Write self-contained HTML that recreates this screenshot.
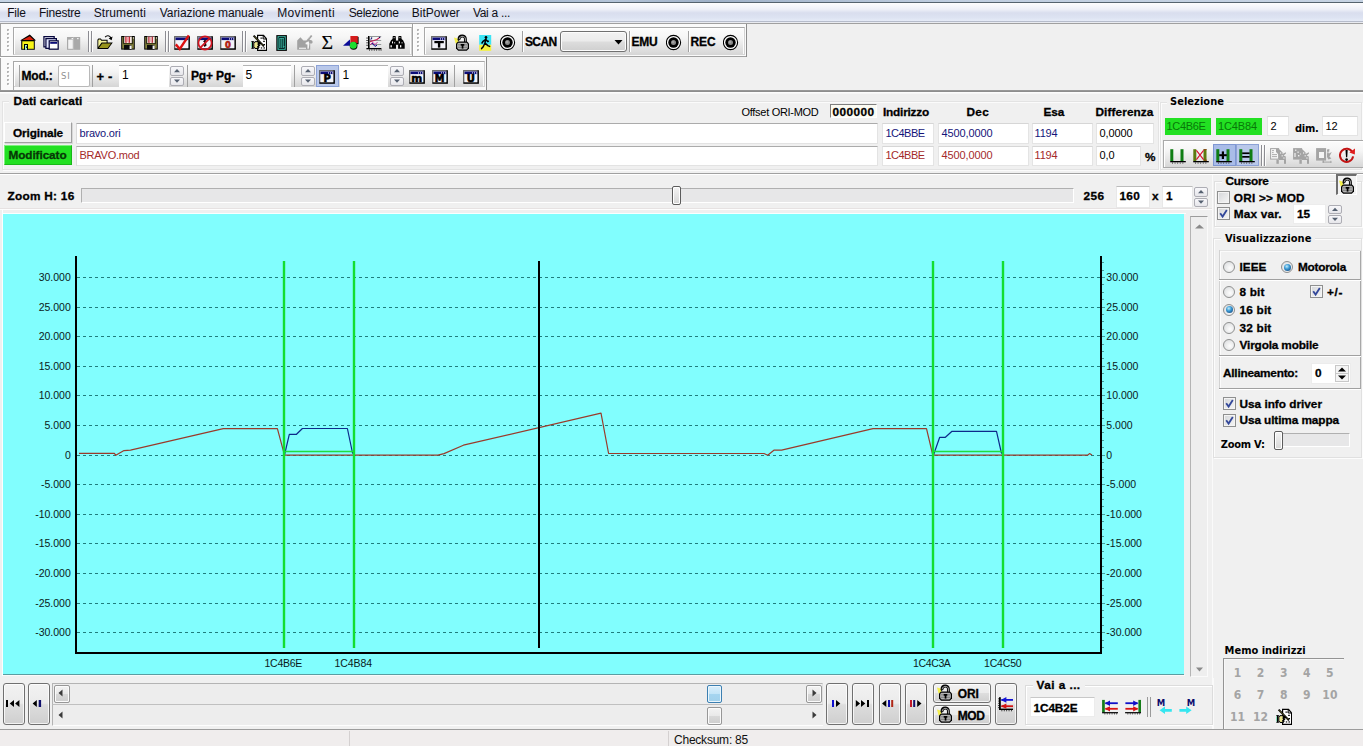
<!DOCTYPE html>
<html lang="it"><head><meta charset="utf-8"><title>Editor mappe</title>
<style>
html,body{margin:0;padding:0}
body{background:#f0f0f0;width:1363px;height:746px;overflow:hidden;font:11px "Liberation Sans",sans-serif}
#app{position:relative;width:1363px;height:746px;overflow:hidden;background:#f0f0f0}
#app div,#app span.t,#app svg{position:absolute;box-sizing:border-box}
span.t{white-space:nowrap;line-height:0;display:block;height:0}
.fld{background:#fff;border:1px solid #e3e3e3;border-top-color:#ababab;border-left-color:#dcdcdc}
.btn{border:1px solid #707070;border-radius:3px;background:linear-gradient(#f2f2f2 0,#ebebeb 48%,#dddddd 52%,#cfcfcf 100%);box-shadow:inset 0 0 0 1px rgba(255,255,255,.75)}
.tbg{background:linear-gradient(#fcfcfc 0,#f5f5f5 38%,#e5e5e5 72%,#d7d7d7 100%)}
.spin{border:1px solid #adadb4;background:linear-gradient(#f8f8fb,#e6e6ea)}

</style></head>
<body>
<div id="app">
<div style="left:0px;top:0px;width:1363px;height:2px;background:linear-gradient(90deg,#c6d4e4 0,#c2d0e2 20%,#8fa3bd 24%,#9fb2c9 32%,#b4c4d8 45%,#9fb1c8 52%,#c0cee0 70%,#c6d3e3 100%)"></div>
<div style="left:0px;top:2px;width:1363px;height:1px;background:#55636e"></div>
<div style="left:0px;top:3px;width:1363px;height:18px;background:linear-gradient(#fdfdfe 0,#eef0f8 35%,#d9deee 55%,#dde3f2 80%,#e6ebf7 100%)"></div>
<div style="left:0px;top:21px;width:1363px;height:1px;background:#b6bccb"></div>
<div style="left:0px;top:22px;width:1363px;height:1px;background:#e9ebf1"></div>
<div style="left:0px;top:23px;width:1363px;height:1px;background:#a0a0a0"></div>
<div style="left:0px;top:24px;width:747px;height:33px;background:#fafafa"></div>
<div style="left:0px;top:57px;width:487px;height:33px;background:#fafafa"></div>
<div style="left:0px;top:24px;width:1px;height:67px;background:#a0a0a0"></div>
<div style="left:0px;top:56px;width:747px;height:1px;background:#a0a0a0"></div>
<div style="left:0px;top:57px;width:487px;height:1px;background:#ffffff"></div>
<div style="left:412px;top:24px;width:1px;height:32px;background:#a0a0a0"></div>
<div style="left:413px;top:24px;width:1px;height:32px;background:#ffffff"></div>
<div style="left:746px;top:24px;width:1px;height:33px;background:#8c8c8c"></div>
<div style="left:486px;top:57px;width:1px;height:34px;background:#8c8c8c"></div>
<div style="left:0px;top:90px;width:1363px;height:1px;background:#989898"></div>
<div style="left:0px;top:91px;width:1363px;height:1px;background:#8e8e8e"></div>
<div style="left:0px;top:92px;width:1363px;height:1px;background:#fdfdfd"></div>
<div style="left:0px;top:93px;width:1363px;height:1px;background:#f7f7f7"></div>
<svg class="ic" style="left:7px;top:29px" width="3" height="26" shape-rendering="crispEdges"><rect x="0" y="0" width="2" height="2" fill="#b4b4b4"/><rect x="1" y="1" width="2" height="2" fill="#ffffff"/><rect x="1" y="1" width="1" height="1" fill="#d0d0d0"/><rect x="0" y="4" width="2" height="2" fill="#b4b4b4"/><rect x="1" y="5" width="2" height="2" fill="#ffffff"/><rect x="1" y="5" width="1" height="1" fill="#d0d0d0"/><rect x="0" y="8" width="2" height="2" fill="#b4b4b4"/><rect x="1" y="9" width="2" height="2" fill="#ffffff"/><rect x="1" y="9" width="1" height="1" fill="#d0d0d0"/><rect x="0" y="12" width="2" height="2" fill="#b4b4b4"/><rect x="1" y="13" width="2" height="2" fill="#ffffff"/><rect x="1" y="13" width="1" height="1" fill="#d0d0d0"/><rect x="0" y="16" width="2" height="2" fill="#b4b4b4"/><rect x="1" y="17" width="2" height="2" fill="#ffffff"/><rect x="1" y="17" width="1" height="1" fill="#d0d0d0"/><rect x="0" y="20" width="2" height="2" fill="#b4b4b4"/><rect x="1" y="21" width="2" height="2" fill="#ffffff"/><rect x="1" y="21" width="1" height="1" fill="#d0d0d0"/></svg>
<div class="tbg" style="left:13px;top:27px;width:399px;height:28px;border:1px solid;border-color:#a8a8a8 #d2d2d2 #d6d6d6 #a8a8a8;box-shadow:inset 1px 1px 0 #fff, inset -1px 0 0 #fbfbfb"></div>
<svg class="ic" style="left:417px;top:29px" width="3" height="26" shape-rendering="crispEdges"><rect x="0" y="0" width="2" height="2" fill="#b4b4b4"/><rect x="1" y="1" width="2" height="2" fill="#ffffff"/><rect x="1" y="1" width="1" height="1" fill="#d0d0d0"/><rect x="0" y="4" width="2" height="2" fill="#b4b4b4"/><rect x="1" y="5" width="2" height="2" fill="#ffffff"/><rect x="1" y="5" width="1" height="1" fill="#d0d0d0"/><rect x="0" y="8" width="2" height="2" fill="#b4b4b4"/><rect x="1" y="9" width="2" height="2" fill="#ffffff"/><rect x="1" y="9" width="1" height="1" fill="#d0d0d0"/><rect x="0" y="12" width="2" height="2" fill="#b4b4b4"/><rect x="1" y="13" width="2" height="2" fill="#ffffff"/><rect x="1" y="13" width="1" height="1" fill="#d0d0d0"/><rect x="0" y="16" width="2" height="2" fill="#b4b4b4"/><rect x="1" y="17" width="2" height="2" fill="#ffffff"/><rect x="1" y="17" width="1" height="1" fill="#d0d0d0"/><rect x="0" y="20" width="2" height="2" fill="#b4b4b4"/><rect x="1" y="21" width="2" height="2" fill="#ffffff"/><rect x="1" y="21" width="1" height="1" fill="#d0d0d0"/></svg>
<div class="tbg" style="left:424px;top:27px;width:321px;height:28px;border:1px solid;border-color:#a8a8a8 #d2d2d2 #d6d6d6 #a8a8a8;box-shadow:inset 1px 1px 0 #fff, inset -1px 0 0 #fbfbfb"></div>
<svg class="ic" style="left:7px;top:63px" width="3" height="24" shape-rendering="crispEdges"><rect x="0" y="0" width="2" height="2" fill="#b4b4b4"/><rect x="1" y="1" width="2" height="2" fill="#ffffff"/><rect x="1" y="1" width="1" height="1" fill="#d0d0d0"/><rect x="0" y="4" width="2" height="2" fill="#b4b4b4"/><rect x="1" y="5" width="2" height="2" fill="#ffffff"/><rect x="1" y="5" width="1" height="1" fill="#d0d0d0"/><rect x="0" y="8" width="2" height="2" fill="#b4b4b4"/><rect x="1" y="9" width="2" height="2" fill="#ffffff"/><rect x="1" y="9" width="1" height="1" fill="#d0d0d0"/><rect x="0" y="12" width="2" height="2" fill="#b4b4b4"/><rect x="1" y="13" width="2" height="2" fill="#ffffff"/><rect x="1" y="13" width="1" height="1" fill="#d0d0d0"/><rect x="0" y="16" width="2" height="2" fill="#b4b4b4"/><rect x="1" y="17" width="2" height="2" fill="#ffffff"/><rect x="1" y="17" width="1" height="1" fill="#d0d0d0"/><rect x="0" y="20" width="2" height="2" fill="#b4b4b4"/><rect x="1" y="21" width="2" height="2" fill="#ffffff"/><rect x="1" y="21" width="1" height="1" fill="#d0d0d0"/></svg>
<div class="tbg" style="left:13px;top:61px;width:472px;height:26px;border:1px solid;border-color:#a8a8a8 #d2d2d2 #d6d6d6 #a8a8a8;box-shadow:inset 1px 1px 0 #fff, inset -1px 0 0 #fbfbfb"></div>
<div style="left:13px;top:61px;width:1px;height:29px;background:#a8a8a8"></div>
<svg class="ic" style="left:20px;top:34px" width="16" height="17" viewBox="0 0 16 17" ><path d="M9.8 0.6 L16 6.6 L14.8 6.6 L14.8 15.8 L1.2 15.8 L1.2 6.6 L0 6.6 Z" fill="#000" shape-rendering="geometricPrecision"/><path d="M9.8 2.2 L13.8 6 L2.4 6 Z" fill="#d8200c" shape-rendering="geometricPrecision"/><rect x="2.3" y="7.3" width="11.5" height="7.5" fill="#f6f418" /><rect x="4" y="10" width="4" height="5.8" fill="#000" /><rect x="5" y="11" width="2" height="4.8" fill="#a6f0c8" /><rect x="6" y="12.4" width="1" height="1.6" fill="#103030" /></svg>
<svg class="ic" style="left:43px;top:34px" width="16" height="17" viewBox="0 0 16 17" ><rect x="0.3" y="2" width="11.5" height="11.5" fill="#06063c" /><rect x="1.55" y="3.25" width="9.0" height="9.0" fill="#f4f4ff" /><rect x="2.3" y="4" width="11.7" height="11" fill="#06063c" /><rect x="3.55" y="5.25" width="9.2" height="8.5" fill="#e4e8ff" /><rect x="5.6" y="6.2" width="10.2" height="9.6" fill="#06063c" /><rect x="6.85" y="7.45" width="7.699999999999999" height="7.1" fill="#fff" /><rect x="7.2" y="8" width="7" height="1.8" fill="#0c0c78" /></svg>
<svg class="ic" style="left:66px;top:34px" width="16" height="17" viewBox="0 0 16 17" ><rect x="1" y="3" width="13.2" height="12.8" fill="#a9a9a9" /><rect x="2.2" y="5.6" width="4.6" height="9.2" fill="#f3f3f3" /><rect x="5.6" y="4" width="1.3" height="1.2" fill="#fff" /><rect x="11.2" y="4" width="1.3" height="1.2" fill="#fff" /><rect x="7.2" y="3" width="0.9" height="12.8" fill="#bdbdbd" /></svg>
<div style="left:88px;top:31px;width:1px;height:21px;background:#8c8c92"></div>
<div style="left:91px;top:31px;width:1px;height:21px;background:#8c8c92"></div>
<div style="left:89px;top:31px;width:1px;height:21px;background:#fdfdfd"></div>
<div style="left:92px;top:31px;width:1px;height:21px;background:#fdfdfd"></div>
<svg class="ic" style="left:97px;top:34px" width="16" height="17" viewBox="0 0 16 17" ><path d="M0.4 5.8 L1.4 4.6 L3.8 4.6 L4.8 5.8 L10.6 5.8 L10.6 8.6 L15.8 8.6 L11 14.9 L0.4 14.9 Z" fill="#000" shape-rendering="geometricPrecision"/><path d="M1.3 6.4 L1.8 5.6 L3.4 5.6 L4.2 6.8 L9.6 6.8 L9.6 8.6 L4.6 8.6 L1.3 13 Z" fill="#f4f29a" shape-rendering="geometricPrecision"/><path d="M5.2 9.6 L14 9.6 L10.6 14 L1.9 14 Z" fill="#98941c" shape-rendering="geometricPrecision"/><path d="M8.2 3.2 C9.5 1.2 12.6 1 14 4.2" fill="none" stroke="#000" stroke-width="1.2" shape-rendering="geometricPrecision"/><path d="M15.6 2.4 L14.6 6.2 L11.6 4.4 Z" fill="#000" shape-rendering="geometricPrecision"/></svg>
<svg class="ic" style="left:120px;top:34px" width="16" height="17" viewBox="0 0 16 17" ><rect x="1.2" y="2" width="13.6" height="13.6" fill="#000" /><rect x="2.2" y="3" width="11.6" height="11.6" fill="#84823c" /><rect x="4" y="2.6" width="8" height="6.4" fill="#f6e6e0" /><rect x="5.3" y="2.6" width="1.3" height="6.2" fill="#c01828" /><rect x="8.6" y="2.6" width="1.3" height="6.2" fill="#c01828" /><rect x="6.6" y="3.2" width="2" height="4.6" fill="#f0a0a8" /><rect x="3.3" y="2.6" width="0.9" height="7.2" fill="#101008" /><rect x="11.8" y="2.6" width="0.9" height="7.2" fill="#101008" /><rect x="3.6" y="9.3" width="9" height="0.9" fill="#20200c" /><rect x="4" y="11" width="7.4" height="4.6" fill="#0a0a0a" /><rect x="9.6" y="11.6" width="2" height="3.4" fill="#f4f4f4" /><rect x="13" y="3.4" width="0.9" height="1.2" fill="#f0f0f0" /></svg>
<svg class="ic" style="left:143px;top:34px" width="16" height="17" viewBox="0 0 16 17" ><rect x="1.2" y="2" width="13.6" height="13.6" fill="#000" /><rect x="2.2" y="3" width="11.6" height="11.6" fill="#84823c" /><rect x="4" y="2.6" width="8" height="6.4" fill="#f6e6e0" /><rect x="5.3" y="2.6" width="1.3" height="6.2" fill="#b02030" /><rect x="8.6" y="2.6" width="1.3" height="6.2" fill="#b02030" /><rect x="6.6" y="3.2" width="2" height="4.6" fill="#e8b0b4" /><rect x="3.3" y="2.6" width="0.9" height="7.2" fill="#101008" /><rect x="11.8" y="2.6" width="0.9" height="7.2" fill="#101008" /><rect x="3.6" y="9.3" width="9" height="0.9" fill="#20200c" /><rect x="4" y="11" width="7.4" height="4.6" fill="#0a0a0a" /><rect x="9.6" y="11.6" width="2" height="3.4" fill="#f4f4f4" /><rect x="13" y="3.4" width="0.9" height="1.2" fill="#f0f0f0" /></svg>
<div style="left:165px;top:31px;width:1px;height:21px;background:#8c8c92"></div>
<div style="left:168px;top:31px;width:1px;height:21px;background:#8c8c92"></div>
<div style="left:166px;top:31px;width:1px;height:21px;background:#fdfdfd"></div>
<div style="left:169px;top:31px;width:1px;height:21px;background:#fdfdfd"></div>
<svg class="ic" style="left:174px;top:34px" width="16" height="17" viewBox="0 0 16 17" ><rect x="0.3" y="2.2" width="15.6" height="13.6" fill="#000" /><rect x="0.3" y="2.2" width="14.1" height="12.1" fill="#7a7a7a" /><rect x="1.4" y="3.3" width="12.9" height="10.9" fill="#f2f2f8" /><rect x="1.5" y="3.5" width="12.8" height="2.6" fill="#0c0c78" /><path d="M1.8 10.4 L5.8 15 L14.8 1.4" fill="none" stroke="#dc1010" stroke-width="2.4" shape-rendering="geometricPrecision" stroke-linejoin="miter"/></svg>
<svg class="ic" style="left:197px;top:34px" width="16" height="17" viewBox="0 0 16 17" ><rect x="0.3" y="2.2" width="15.6" height="13.6" fill="#000" /><rect x="0.3" y="2.2" width="14.1" height="12.1" fill="#7a7a7a" /><rect x="1.4" y="3.3" width="12.9" height="10.9" fill="#f2f2f8" /><rect x="1.5" y="3.5" width="12.8" height="2.6" fill="#0c0c78" /><path d="M8 5.2 L10 8 L8.8 8 L9.6 11.6 L7.6 13 L6.4 11.4 L7.6 10.4 L7 8 L6 8 Z" fill="#200808" shape-rendering="geometricPrecision"/><circle cx="8" cy="9" r="6.6" fill="none" stroke="#d01420" stroke-width="1.7" shape-rendering="geometricPrecision"/><path d="M3.4 13.6 L12.6 4.4" fill="none" stroke="#d01420" stroke-width="1.8" shape-rendering="geometricPrecision"/></svg>
<svg class="ic" style="left:220px;top:34px" width="16" height="17" viewBox="0 0 16 17" ><rect x="0.3" y="2.2" width="15.6" height="13.6" fill="#000" /><rect x="0.3" y="2.2" width="14.1" height="12.1" fill="#7a7a7a" /><rect x="1.4" y="3.3" width="12.9" height="10.9" fill="#f2f2f8" /><rect x="1.5" y="3.5" width="12.8" height="2.6" fill="#0c0c78" /><rect x="9" y="4.4" width="1" height="1.1" fill="#fff" /><rect x="11" y="4.4" width="1" height="1.1" fill="#fff" /><rect x="13" y="4.4" width="1" height="1.1" fill="#fff" /><text x="8" y="13.7" font-family="DejaVu Sans,sans-serif" font-weight="bold" font-size="8.4" text-anchor="middle" fill="#b01c0c" stroke="#b01c0c" stroke-width="0.6" >0</text></svg>
<div style="left:242px;top:31px;width:1px;height:21px;background:#8c8c92"></div>
<div style="left:245px;top:31px;width:1px;height:21px;background:#8c8c92"></div>
<div style="left:243px;top:31px;width:1px;height:21px;background:#fdfdfd"></div>
<div style="left:246px;top:31px;width:1px;height:21px;background:#fdfdfd"></div>
<svg class="ic" style="left:251px;top:34px" width="16" height="17" viewBox="0 0 16 17" ><path d="M6 0.8 L12.8 0.8 L16.2 4.6 L16.2 17 L6 17 Z" fill="#000" shape-rendering="geometricPrecision"/><path d="M7.2 2 L12.2 2 L15 5.2 L15 15.8 L7.2 15.8 Z" fill="#fff" shape-rendering="geometricPrecision"/><path d="M12.2 1.4 L12.2 5 L15.6 5" fill="none" stroke="#000" stroke-width="1" shape-rendering="geometricPrecision"/><rect x="9.4" y="3.6" width="2" height="1" fill="#000" /><rect x="12" y="6.8" width="2" height="1" fill="#000" /><rect x="12.4" y="10" width="1.6" height="1" fill="#000" /><rect x="9.8" y="13.4" width="1.4" height="1.1" fill="#000" /><rect x="12.4" y="13.4" width="1.6" height="1.1" fill="#000" /><path d="M2.6 1.6 L13 12.4" fill="none" stroke="#000" stroke-width="2.0" shape-rendering="geometricPrecision"/><path d="M3.2 2.4 L12 11.6" fill="none" stroke="#8c8a3c" stroke-width="0.7" shape-rendering="geometricPrecision"/><path d="M2.4 8.6 L4.6 7 L8.6 7.8 L11 10 L8.4 10.4 L9.6 11.6 L8 12.2 L9 13.2 L7.4 14 L8 15 L4.4 15 L2.4 13.6 Z" fill="#000" shape-rendering="geometricPrecision"/><path d="M3.3 9 L4.9 8 L7 8.6 L6.4 10.2 L7.2 11.4 L6 12.2 L6.6 13.4 L5.4 14 L4.6 14 L3.3 13 Z" fill="#ece68e" shape-rendering="geometricPrecision"/><rect x="0.9" y="7.4" width="1.5" height="7" fill="#000" /><rect x="0.3" y="7.2" width="2.6" height="0.9" fill="#000" /><rect x="0.3" y="13.8" width="2.6" height="0.9" fill="#000" /><rect x="0" y="8.4" width="0.9" height="5" fill="#7adcb4" /></svg>
<svg class="ic" style="left:274px;top:34px" width="16" height="17" viewBox="0 0 16 17" ><rect x="2.3" y="1.1" width="10.6" height="15.8" fill="#000" /><rect x="3.5" y="2.2" width="8.2" height="13.6" fill="#42c8b2" /><path d="M4.9 3.4 H10.4 V14.6 H4.9 Z" fill="none" stroke="#031c1c" stroke-width="1.0" /><rect x="6.4" y="4.6" width="1" height="9.4" fill="#031c1c" /><rect x="8.3" y="4.6" width="1" height="9.4" fill="#031c1c" /><rect x="9.4" y="12" width="1" height="1.2" fill="#42c8b2" /></svg>
<svg class="ic" style="left:297px;top:34px" width="16" height="17" viewBox="0 0 16 17" ><path d="M0.2 15.8 L0.2 6.6 L3.4 3.2 L6.4 6.4 L9.4 6.4 L14 1 L15.4 2 L12.4 5.8 L14.4 6.2 C15.8 6.6 16 8.6 15 9.6 L13.2 9.4 L13.2 15.8 Z" fill="#a2a2a2" shape-rendering="geometricPrecision"/><rect x="2" y="13.7" width="7" height="1.1" fill="#f4f4f4" /><path d="M8.6 8.8 L11.6 7.2 L12.4 9.4 L11.8 14.8 L10.4 14.8 L10.4 10.4 L8.6 10.2 Z" fill="#f6f6f6" shape-rendering="geometricPrecision"/><path d="M11 4.6 L12.6 2.6" fill="none" stroke="#e0e0e0" stroke-width=".8" shape-rendering="geometricPrecision"/></svg>
<svg class="ic" style="left:320px;top:34px" width="16" height="17" viewBox="0 0 16 17" ><text x="1.6" y="15.2" font-family="Liberation Serif,serif" font-size="18.5" textLength="11.6" lengthAdjust="spacingAndGlyphs" fill="#000" stroke="#000" stroke-width=".12">&#931;</text></svg>
<svg class="ic" style="left:343px;top:34px" width="16" height="17" viewBox="0 0 16 17" ><rect x="8.2" y="2.8" width="7.4" height="7.4" fill="#000" /><rect x="7.4" y="2" width="7.4" height="7.2" fill="#d41c1c" /><path d="M0 11.8 L6.8 5.6 L7.6 11.8 Z" fill="#0c0c98" shape-rendering="geometricPrecision"/><circle cx="10.6" cy="11.8" r="3.9" fill="#000" shape-rendering="geometricPrecision"/><circle cx="10.3" cy="11.3" r="3.5" fill="#1ce030" shape-rendering="geometricPrecision"/></svg>
<svg class="ic" style="left:366px;top:34px" width="16" height="17" viewBox="0 0 16 17" ><rect x="2" y="2" width="1.6" height="13" fill="#000" /><rect x="0.4" y="14" width="15" height="1.3" fill="#000" /><rect x="3.6" y="2.2" width="11.6" height="0.8" fill="#7c8484" /><rect x="3.6" y="6" width="11.6" height="0.8" fill="#7c8484" /><rect x="3.6" y="10" width="11.6" height="0.8" fill="#7c8484" /><rect x="0.2" y="3.6" width="1.8" height="0.9" fill="#404040" /><rect x="0.2" y="6" width="1.8" height="0.9" fill="#404040" /><rect x="0.2" y="8.4" width="1.8" height="0.9" fill="#404040" /><rect x="0.2" y="10.8" width="1.8" height="0.9" fill="#404040" /><rect x="3" y="15.3" width="0.9" height="1.4" fill="#303030" /><rect x="5.4" y="15.3" width="0.9" height="1.4" fill="#303030" /><rect x="7.8" y="15.3" width="0.9" height="1.4" fill="#303030" /><rect x="10.2" y="15.3" width="0.9" height="1.4" fill="#303030" /><rect x="12.6" y="15.3" width="0.9" height="1.4" fill="#303030" /><rect x="14.6" y="15.3" width="0.9" height="1.4" fill="#303030" /><path d="M4 7.6 L8 6.6 L11 5.4 L14 3.2" fill="none" stroke="#c01c50" stroke-width="1.1" shape-rendering="geometricPrecision"/><path d="M4 11 L6.6 8.4 L9 10.6 L11.4 8.2" fill="none" stroke="#c02890" stroke-width="1" shape-rendering="geometricPrecision"/><path d="M4.4 5.2 L6 4.6 M6 9 L9 12.4 L11 11.2" fill="none" stroke="#101090" stroke-width="1" shape-rendering="geometricPrecision"/><rect x="13" y="2.8" width="1.2" height="1.2" fill="#101060" /><rect x="5" y="3.4" width="1.2" height="1.2" fill="#101060" /></svg>
<svg class="ic" style="left:389px;top:34px" width="16" height="17" viewBox="0 0 16 17" ><path d="M3.8 2 L6.6 2 L6.9 5 L7 14.8 L0.3 14.8 L0.3 9.8 L2 6.2 L3.5 5 Z" fill="#000" shape-rendering="geometricPrecision"/><path d="M9.5 2 L12.3 2 L12.6 5 L14.1 6.2 L15.7 9.8 L15.7 14.8 L9.1 14.8 L9.2 5 Z" fill="#000" shape-rendering="geometricPrecision"/><rect x="6.8" y="6.6" width="2.6" height="4.2" fill="#000" /><rect x="4.6" y="3.2" width="1" height="1" fill="#fff" /><rect x="10.4" y="3.2" width="1" height="1" fill="#fff" /><rect x="3" y="7.4" width="1" height="2" fill="#fff" /><rect x="9.9" y="7.4" width="1" height="2" fill="#fff" /><rect x="1.5" y="11.2" width="1.3" height="2.2" fill="#fff" /><rect x="11" y="11.2" width="1.3" height="2.2" fill="#fff" /><rect x="5.2" y="8.2" width="0.9" height="1.2" fill="#e8e8e8" /><rect x="12.6" y="8.2" width="0.9" height="1.2" fill="#e8e8e8" /></svg>
<svg class="ic" style="left:431px;top:34px" width="16" height="17" viewBox="0 0 16 17" ><rect x="0.3" y="2.2" width="15.6" height="13.6" fill="#000" /><rect x="0.3" y="2.2" width="14.1" height="12.1" fill="#7a7a7a" /><rect x="1.4" y="3.3" width="12.9" height="10.9" fill="#f2f2f8" /><rect x="1.5" y="3.5" width="12.8" height="2.6" fill="#0c0c78" /><rect x="9" y="4.4" width="1" height="1.1" fill="#fff" /><rect x="11" y="4.4" width="1" height="1.1" fill="#fff" /><rect x="13" y="4.4" width="1" height="1.1" fill="#fff" /><rect x="3.4" y="7" width="9.4" height="2.2" fill="#000" /><rect x="6.9" y="7" width="2.4" height="6.6" fill="#000" /></svg>
<svg class="ic" style="left:454px;top:34px" width="16" height="17" viewBox="0 0 16 17" ><path d="M0 3.6 L3.6 4.4 L4.6 8.8 L1.6 9.6 Z" fill="#f4f03c" shape-rendering="geometricPrecision" opacity=".9"/><path d="M11.4 8.6 L11.4 5 C11.4 0.9 5 0.9 5 5.4 L5.6 6.2" fill="none" stroke="#000" stroke-width="2.9" shape-rendering="geometricPrecision" stroke-linecap="butt"/><path d="M11.4 8.6 L11.4 5 C11.4 1.4 5.2 1.4 5.2 5.3" fill="none" stroke="#cfcfcf" stroke-width="0.8" shape-rendering="geometricPrecision"/><path d="M4 7.6 L13 7.6 L15 9.6 L15 14.4 L12.8 16.7 L4.2 16.7 L2 14.4 L2 9.6 Z" fill="#000" shape-rendering="geometricPrecision"/><path d="M4.4 8.7 L12.6 8.7 L13.9 10 L13.9 14 L12.4 15.6 L4.6 15.6 L3.1 14 L3.1 10 Z" fill="#b4b4b4" shape-rendering="geometricPrecision"/><rect x="3.1" y="10.4" width="10.8" height="0.9" fill="#767676" /><rect x="3.1" y="12.8" width="10.8" height="0.9" fill="#767676" /><rect x="6.7" y="10" width="3.6" height="1.7" fill="#000" /><rect x="7.7" y="11" width="1.7" height="3.6" fill="#000" /></svg>
<svg class="ic" style="left:477px;top:34px" width="16" height="17" viewBox="0 0 16 17" ><rect x="2.2" y="1" width="12" height="9.8" fill="#3ce4f4" /><rect x="2.2" y="10.8" width="12" height="6" fill="#f4f23c" /><circle cx="9" cy="3.2" r="1.3" fill="#000" shape-rendering="geometricPrecision"/><path d="M9 4.4 L8 9 L10.8 11.6 L12.6 12.4 M8 9 L6.2 12.8 L4.6 14.6 M8.8 5.4 L6 7.4 L5 9 M8.8 5.4 L10.8 7.6 L11.4 7.2" fill="none" stroke="#000" stroke-width="1.5" shape-rendering="geometricPrecision" stroke-linejoin="round" stroke-linecap="round"/></svg>
<svg class="ic" style="left:500px;top:34px" width="16" height="17" viewBox="0 0 16 17" ><circle cx="7.5" cy="8.5" r="7.1" fill="#fdfdfd" stroke="#000" stroke-width="1.1" shape-rendering="geometricPrecision"/><circle cx="7.5" cy="8.5" r="5.2" fill="#000" shape-rendering="geometricPrecision"/><circle cx="7.5" cy="8.5" r="2.5" fill="#8a8a8a" shape-rendering="geometricPrecision"/><circle cx="7" cy="8" r="1.2" fill="#a4a4a4" shape-rendering="geometricPrecision"/></svg>
<div style="left:522px;top:31px;width:1px;height:21px;background:#a0a0a0"></div>
<div style="left:523px;top:31px;width:1px;height:21px;background:#ffffff"></div>
<div style="left:560px;top:31px;width:67px;height:21px;border:1px solid #707070;border-radius:3px;background:linear-gradient(#f2f2f2 0,#ebebeb 48%,#dddddd 52%,#cfcfcf 100%);box-shadow:inset 0 0 0 1px #fcfcfc"></div>
<svg class="ic" style="left:614px;top:40px" width="9" height="5"><path d="M0.5 0 L8.5 0 L4.5 4.5 Z" fill="#000"/></svg>
<div style="left:629px;top:31px;width:1px;height:21px;background:#a0a0a0"></div>
<div style="left:630px;top:31px;width:1px;height:21px;background:#ffffff"></div>
<svg class="ic" style="left:666px;top:34px" width="16" height="17" viewBox="0 0 16 17" ><circle cx="7.5" cy="8.5" r="7.1" fill="#fdfdfd" stroke="#000" stroke-width="1.1" shape-rendering="geometricPrecision"/><circle cx="7.5" cy="8.5" r="5.2" fill="#000" shape-rendering="geometricPrecision"/><circle cx="7.5" cy="8.5" r="2.5" fill="#8a8a8a" shape-rendering="geometricPrecision"/><circle cx="7" cy="8" r="1.2" fill="#a4a4a4" shape-rendering="geometricPrecision"/></svg>
<div style="left:688px;top:31px;width:1px;height:21px;background:#a0a0a0"></div>
<div style="left:689px;top:31px;width:1px;height:21px;background:#ffffff"></div>
<svg class="ic" style="left:723px;top:34px" width="16" height="17" viewBox="0 0 16 17" ><circle cx="7.5" cy="8.5" r="7.1" fill="#fdfdfd" stroke="#000" stroke-width="1.1" shape-rendering="geometricPrecision"/><circle cx="7.5" cy="8.5" r="5.2" fill="#000" shape-rendering="geometricPrecision"/><circle cx="7.5" cy="8.5" r="2.5" fill="#8a8a8a" shape-rendering="geometricPrecision"/><circle cx="7" cy="8" r="1.2" fill="#a4a4a4" shape-rendering="geometricPrecision"/></svg>
<div style="left:19px;top:65px;width:1px;height:22px;background:#a0a0a0"></div>
<div class="fld" style="left:58px;top:65px;width:32px;height:22px;border:1px solid #b8b8b8;border-radius:2px"></div>
<div style="left:92px;top:65px;width:1px;height:22px;background:#a0a0a0"></div>
<div style="left:119px;top:65px;width:50px;height:22px;background:#fff;border-top:1px solid #b4b4b4"></div>
<div class="spin" style="left:170px;top:66px;width:14px;height:9.5px;border-radius:2px"></div>
<div class="spin" style="left:170px;top:76.5px;width:14px;height:9.5px;border-radius:2px"></div>
<svg class="ic" style="left:170px;top:66px" width="14" height="20"><path d="M4.0 6.35 L7.0 2.95 L10.0 6.35 Z" fill="#556070"/><path d="M4.0 13.45 L7.0 16.85 L10.0 13.45 Z" fill="#556070"/></svg>
<div style="left:187px;top:65px;width:1px;height:22px;background:#a0a0a0"></div>
<div style="left:243px;top:65px;width:48px;height:22px;background:#fff;border-top:1px solid #b4b4b4"></div>
<div style="left:294px;top:65px;width:1px;height:22px;background:#a0a0a0"></div>
<div class="spin" style="left:301px;top:66px;width:14px;height:9.5px;border-radius:2px"></div>
<div class="spin" style="left:301px;top:76.5px;width:14px;height:9.5px;border-radius:2px"></div>
<svg class="ic" style="left:301px;top:66px" width="14" height="20"><path d="M4.0 6.35 L7.0 2.95 L10.0 6.35 Z" fill="#556070"/><path d="M4.0 13.45 L7.0 16.85 L10.0 13.45 Z" fill="#556070"/></svg>
<div style="left:316px;top:65px;width:23px;height:22px;background:#b9c8ea;border:1px solid #8da2d6"></div>
<svg class="ic" style="left:319px;top:68px" width="16" height="17" viewBox="0 0 16 17" ><rect x="0.3" y="2.2" width="15.6" height="13.6" fill="#000" /><rect x="0.3" y="2.2" width="14.1" height="12.1" fill="#7a7a7a" /><rect x="1.4" y="3.3" width="12.9" height="10.9" fill="#f2f2f8" /><rect x="1.5" y="3.5" width="12.8" height="2.6" fill="#0c0c78" /><rect x="9" y="4.4" width="1" height="1.1" fill="#fff" /><rect x="11" y="4.4" width="1" height="1.1" fill="#fff" /><rect x="13" y="4.4" width="1" height="1.1" fill="#fff" /><text x="8.2" y="13.8" font-family="DejaVu Sans,sans-serif" font-weight="bold" font-size="10" text-anchor="middle" fill="#000" stroke="#000" stroke-width="0.6" >P</text></svg>
<div style="left:340px;top:65px;width:48px;height:22px;background:#fff;border-top:1px solid #b4b4b4"></div>
<div class="spin" style="left:390px;top:66px;width:14px;height:9.5px;border-radius:2px"></div>
<div class="spin" style="left:390px;top:76.5px;width:14px;height:9.5px;border-radius:2px"></div>
<svg class="ic" style="left:390px;top:66px" width="14" height="20"><path d="M4.0 6.35 L7.0 2.95 L10.0 6.35 Z" fill="#556070"/><path d="M4.0 13.45 L7.0 16.85 L10.0 13.45 Z" fill="#556070"/></svg>
<svg class="ic" style="left:409px;top:68px" width="16" height="17" viewBox="0 0 16 17" ><rect x="0.3" y="2.2" width="15.6" height="13.6" fill="#000" /><rect x="0.3" y="2.2" width="14.1" height="12.1" fill="#7a7a7a" /><rect x="1.4" y="3.3" width="12.9" height="10.9" fill="#f2f2f8" /><rect x="1.5" y="3.5" width="12.8" height="2.6" fill="#0c0c78" /><rect x="9" y="4.4" width="1" height="1.1" fill="#fff" /><rect x="11" y="4.4" width="1" height="1.1" fill="#fff" /><rect x="13" y="4.4" width="1" height="1.1" fill="#fff" /><text x="7.7" y="13.6" font-family="DejaVu Sans,sans-serif" font-weight="bold" font-size="10.5" text-anchor="middle" fill="#000" stroke="#000" stroke-width="0.6" >m</text></svg>
<svg class="ic" style="left:432px;top:68px" width="16" height="17" viewBox="0 0 16 17" ><rect x="0.3" y="2.2" width="15.6" height="13.6" fill="#000" /><rect x="0.3" y="2.2" width="14.1" height="12.1" fill="#7a7a7a" /><rect x="1.4" y="3.3" width="12.9" height="10.9" fill="#f2f2f8" /><rect x="1.5" y="3.5" width="12.8" height="2.6" fill="#0c0c78" /><rect x="9" y="4.4" width="1" height="1.1" fill="#fff" /><rect x="11" y="4.4" width="1" height="1.1" fill="#fff" /><rect x="13" y="4.4" width="1" height="1.1" fill="#fff" /><text x="7.7" y="13.8" font-family="DejaVu Sans,sans-serif" font-weight="bold" font-size="9.8" text-anchor="middle" fill="#000" stroke="#000" stroke-width="0.6" >M</text></svg>
<div style="left:454px;top:65px;width:1px;height:22px;background:#a0a0a0"></div>
<svg class="ic" style="left:463px;top:68px" width="16" height="17" viewBox="0 0 16 17" ><rect x="0.3" y="2.2" width="15.6" height="13.6" fill="#000" /><rect x="0.3" y="2.2" width="14.1" height="12.1" fill="#7a7a7a" /><rect x="1.4" y="3.3" width="12.9" height="10.9" fill="#f2f2f8" /><rect x="1.5" y="3.5" width="12.8" height="2.6" fill="#0c0c78" /><rect x="9" y="4.4" width="1" height="1.1" fill="#fff" /><rect x="11" y="4.4" width="1" height="1.1" fill="#fff" /><rect x="13" y="4.4" width="1" height="1.1" fill="#fff" /><text x="7.7" y="13.8" font-family="DejaVu Sans,sans-serif" font-weight="bold" font-size="10" text-anchor="middle" fill="#000" stroke="#000" stroke-width="0.6" >U</text></svg>
<div style="left:2px;top:101px;width:1157px;height:69px;border:1px solid #e3e3e3;box-shadow:inset 1px 1px 0 #fbfbfb, 1px 1px 0 #fbfbfb"></div>
<div style="left:9px;top:95px;width:78px;height:12px;background:#f0f0f0"></div>
<div style="left:1160px;top:102px;width:202px;height:68px;border:1px solid #e3e3e3;box-shadow:inset 1px 1px 0 #fbfbfb, 1px 1px 0 #fbfbfb"></div>
<div style="left:1167px;top:96px;width:60px;height:12px;background:#f0f0f0"></div>
<div style="left:0px;top:173px;width:1363px;height:1px;background:#a0a0a0"></div>
<div style="left:0px;top:174px;width:1363px;height:1px;background:#ffffff"></div>
<div style="left:4px;top:122px;width:68px;height:21px;background:#f0f0f0;border:1px solid;border-color:#ffffff #a0a0a0 #a0a0a0 #ffffff;box-shadow:1px 1px 0 #d8d8d8"></div>
<div style="left:4px;top:145px;width:68px;height:20px;background:#22e022;border:1px solid;border-color:#7df07d #18b818 #18b818 #7df07d"></div>
<div class="fld" style="left:76px;top:123px;width:802px;height:21px;"></div>
<div class="fld" style="left:76px;top:146px;width:802px;height:20px;"></div>
<div style="left:830px;top:104px;width:47px;height:14px;background:#fbfbf3;border:1px solid;border-color:#808080 #fff #fff #808080"></div>
<div style="left:882px;top:123px;width:52px;height:21px;background:#fff;border:1px solid #e4e4e4;border-top-color:#d6d6d6"></div>
<div style="left:882px;top:146px;width:52px;height:20px;background:#fff;border:1px solid #e4e4e4;border-top-color:#d6d6d6"></div>
<div style="left:938px;top:123px;width:91px;height:21px;background:#fff;border:1px solid #e4e4e4;border-top-color:#d6d6d6"></div>
<div style="left:938px;top:146px;width:91px;height:20px;background:#fff;border:1px solid #e4e4e4;border-top-color:#d6d6d6"></div>
<div style="left:1032px;top:123px;width:61px;height:21px;background:#fff;border:1px solid #e4e4e4;border-top-color:#d6d6d6"></div>
<div style="left:1032px;top:146px;width:61px;height:20px;background:#fff;border:1px solid #e4e4e4;border-top-color:#d6d6d6"></div>
<div style="left:1096px;top:123px;width:58px;height:21px;background:#fff;border:1px solid #e4e4e4;border-top-color:#d6d6d6"></div>
<div style="left:1096px;top:146px;width:45px;height:20px;background:#fff;border:1px solid #e4e4e4;border-top-color:#d6d6d6"></div>
<div style="left:1165px;top:118px;width:46px;height:17px;background:#22e022"></div>
<div style="left:1216px;top:118px;width:46px;height:17px;background:#22e022"></div>
<div style="left:1267px;top:116px;width:22px;height:20px;background:#fff;border:1px solid #e4e4e4;border-top-color:#d6d6d6"></div>
<div style="left:1322px;top:116px;width:36px;height:20px;background:#fff;border:1px solid #e4e4e4;border-top-color:#d6d6d6"></div>
<div class="tbg" style="left:1163px;top:140px;width:200px;height:28px;border:1px solid #a9a9a9;border-right:0;box-shadow:inset 1px 1px 0 #fff"></div>
<div style="left:1213px;top:144px;width:23px;height:22px;background:#a9bce8;border:1px solid #7f97d3"></div>
<div style="left:1236px;top:144px;width:23px;height:22px;background:#b9c8ea;border:1px solid #8da2d6"></div>
<svg class="ic" style="left:1170px;top:147px" width="16" height="17" viewBox="0 0 16 17" ><rect x="0.3" y="2.2" width="3" height="11.8" fill="#0f7d14" /><rect x="10.5" y="2.2" width="3" height="11.8" fill="#0f7d14" /><rect x="0.2" y="14" width="15.6" height="1.3" fill="#000" /><rect x="2" y="15.4" width="0.9" height="1.3" fill="#444" /><rect x="4.6" y="15.4" width="0.9" height="1.3" fill="#444" /><rect x="7.2" y="15.4" width="0.9" height="1.3" fill="#444" /><rect x="9.8" y="15.4" width="0.9" height="1.3" fill="#444" /><rect x="12.4" y="15.4" width="0.9" height="1.3" fill="#444" /></svg>
<svg class="ic" style="left:1193px;top:147px" width="16" height="17" viewBox="0 0 16 17" ><rect x="0.3" y="2.2" width="3" height="11.8" fill="#5e7a10" /><rect x="10.5" y="2.2" width="3" height="11.8" fill="#5e7a10" /><rect x="0.2" y="14" width="15.6" height="1.3" fill="#000" /><rect x="2" y="15.4" width="0.9" height="1.3" fill="#444" /><rect x="4.6" y="15.4" width="0.9" height="1.3" fill="#444" /><rect x="7.2" y="15.4" width="0.9" height="1.3" fill="#444" /><rect x="9.8" y="15.4" width="0.9" height="1.3" fill="#444" /><rect x="12.4" y="15.4" width="0.9" height="1.3" fill="#444" /><path d="M3.4 3.4 L10.6 12.6 M10.6 3.4 L3.4 12.6" fill="none" stroke="#d81030" stroke-width="1.1" shape-rendering="geometricPrecision"/><path d="M10.6 2.6 L13.6 2.6 M10.6 13.2 L14 13.2" fill="none" stroke="#8a3a10" stroke-width="0.9" shape-rendering="geometricPrecision"/></svg>
<svg class="ic" style="left:1216px;top:147px" width="16" height="17" viewBox="0 0 16 17" ><rect x="0.3" y="2.2" width="3" height="11.8" fill="#0f7d14" /><rect x="10.5" y="2.2" width="3" height="11.8" fill="#0f7d14" /><rect x="0.2" y="14" width="15.6" height="1.3" fill="#000" /><rect x="2" y="15.4" width="0.9" height="1.3" fill="#444" /><rect x="4.6" y="15.4" width="0.9" height="1.3" fill="#444" /><rect x="7.2" y="15.4" width="0.9" height="1.3" fill="#444" /><rect x="9.8" y="15.4" width="0.9" height="1.3" fill="#444" /><rect x="12.4" y="15.4" width="0.9" height="1.3" fill="#444" /><rect x="3.2" y="7.2" width="7.6" height="2" fill="#000" /><rect x="5.8" y="4.4" width="2.2" height="7.6" fill="#000" /></svg>
<svg class="ic" style="left:1239px;top:147px" width="16" height="17" viewBox="0 0 16 17" ><rect x="0.3" y="2.2" width="3" height="11.8" fill="#0f7d14" /><rect x="10.5" y="2.2" width="3" height="11.8" fill="#0f7d14" /><rect x="0.2" y="14" width="15.6" height="1.3" fill="#000" /><rect x="2" y="15.4" width="0.9" height="1.3" fill="#444" /><rect x="4.6" y="15.4" width="0.9" height="1.3" fill="#444" /><rect x="7.2" y="15.4" width="0.9" height="1.3" fill="#444" /><rect x="9.8" y="15.4" width="0.9" height="1.3" fill="#444" /><rect x="12.4" y="15.4" width="0.9" height="1.3" fill="#444" /><rect x="3.2" y="5.4" width="7.4" height="1.7" fill="#000" /><rect x="3.2" y="9" width="7.4" height="1.7" fill="#000" /></svg>
<div style="left:1261px;top:145px;width:1px;height:21px;background:#8c8c92"></div>
<div style="left:1264px;top:145px;width:1px;height:21px;background:#8c8c92"></div>
<div style="left:1262px;top:145px;width:1px;height:21px;background:#fdfdfd"></div>
<div style="left:1265px;top:145px;width:1px;height:21px;background:#fdfdfd"></div>
<svg class="ic" style="left:1270px;top:147px" width="16" height="17" viewBox="0 0 16 17" ><rect x="0.1" y="1.1" width="9" height="11.5" fill="#a4a4a4" /><rect x="1.1" y="2.1" width="7" height="9.5" fill="#f6f6f6" /><rect x="2" y="3.2" width="2" height="0.9" fill="#a4a4a4" /><rect x="2" y="5.2" width="1.6" height="0.9" fill="#a4a4a4" /><rect x="2" y="7.2" width="5" height="0.9" fill="#a4a4a4" /><rect x="2" y="9.2" width="5" height="0.9" fill="#a4a4a4" /><path d="M6 2 L9 2 L12.6 5.6 L12.6 7 L15.8 5.2 L16 6.4 L13.6 8.4 L15.8 9.6 L15.8 13 L9 13 L9 8 L6 5 Z" fill="#a4a4a4" shape-rendering="geometricPrecision"/><rect x="10" y="5.4" width="1.2" height="1.2" fill="#f0f0f0" /><rect x="11.6" y="8.2" width="1.2" height="1.2" fill="#f0f0f0" /><rect x="13.4" y="10.4" width="1.1" height="1.3" fill="#f0f0f0" /><rect x="6.4" y="12.6" width="2.4" height="4.2" fill="#a4a4a4" /><rect x="14" y="12.6" width="2" height="4.2" fill="#a4a4a4" /></svg>
<svg class="ic" style="left:1293px;top:147px" width="16" height="17" viewBox="0 0 16 17" ><rect x="0.1" y="1.1" width="9" height="11.5" fill="#a4a4a4" /><rect x="2" y="2.6" width="1.4" height="1.2" fill="#f0f0f0" /><rect x="1.4" y="6" width="1.2" height="4" fill="#f0f0f0" /><rect x="4.4" y="4.6" width="1.4" height="1.2" fill="#f0f0f0" /><rect x="5" y="8" width="1.4" height="1.4" fill="#f0f0f0" /><rect x="7" y="6.2" width="1.2" height="1.2" fill="#f0f0f0" /><path d="M6 2 L9 2 L12.6 5.6 L12.6 7 L15.8 5.2 L16 6.4 L13.6 8.4 L15.8 9.6 L15.8 13 L9 13 L9 8 L6 5 Z" fill="#a4a4a4" shape-rendering="geometricPrecision"/><rect x="10" y="5.4" width="1.2" height="1.2" fill="#f0f0f0" /><rect x="11.6" y="8.2" width="1.2" height="1.2" fill="#f0f0f0" /><rect x="13.4" y="10.4" width="1.1" height="1.3" fill="#f0f0f0" /><rect x="6.4" y="12.6" width="2.4" height="4.2" fill="#a4a4a4" /><rect x="14" y="12.6" width="2" height="4.2" fill="#a4a4a4" /></svg>
<svg class="ic" style="left:1316px;top:147px" width="16" height="17" viewBox="0 0 16 17" ><rect x="0.1" y="1.1" width="10" height="12.5" fill="#a4a4a4" /><rect x="3" y="5" width="5" height="6" fill="#f4f4f4" /><path d="M11 2.4 L13.4 2 L13 6.4 L15.8 5 L13.4 9.4 L15.4 11.4 L12.4 12.6 L11 10 Z" fill="#a4a4a4" shape-rendering="geometricPrecision"/><rect x="6.6" y="14.6" width="8.6" height="1" fill="#a4a4a4" /><rect x="6.6" y="13.4" width="1.4" height="2.4" fill="#a4a4a4" /><rect x="14.4" y="13.8" width="1" height="2.2" fill="#a4a4a4" /><rect x="11.6" y="4.6" width="1" height="1.6" fill="#f2f2f2" /></svg>
<svg class="ic" style="left:1339px;top:147px" width="16" height="17" viewBox="0 0 16 17" ><path d="M13.4 5.2 A6.6 6.6 0 1 0 14.1 9.4" fill="none" stroke="#c21414" stroke-width="2" shape-rendering="geometricPrecision"/><path d="M16 1.6 L15.8 7.6 L10.4 5.4 Z" fill="#e01c1c" shape-rendering="geometricPrecision"/><path d="M6.5 3 L8.7 3 L8.2 10.2 L7 10.2 Z" fill="#000" shape-rendering="geometricPrecision"/><circle cx="7.6" cy="12.6" r="1.3" fill="#000" shape-rendering="geometricPrecision"/></svg>
<div style="left:81px;top:188px;width:993px;height:15px;background:#e7e7e8;border-top:1px solid #b0b0b0;border-left:1px solid #b0b0b0;border-bottom:1px solid #fff;border-right:1px solid #fff"></div>
<div style="left:672px;top:186px;width:9px;height:19px;border:1px solid #5c5c5c;border-radius:2px;background:linear-gradient(#f4f4f4,#d6d6d6);box-shadow:inset 0 0 0 1px #fff"></div>
<div style="left:1116px;top:186px;width:34px;height:22px;background:#fff;border:1px solid #e8e8e8;border-top-color:#bcbcbc"></div>
<div style="left:1162px;top:186px;width:31px;height:22px;background:#fff;border:1px solid #e8e8e8;border-top-color:#bcbcbc"></div>
<div class="spin" style="left:1194px;top:187px;width:14px;height:9.5px;border-radius:2px"></div>
<div class="spin" style="left:1194px;top:197.5px;width:14px;height:9.5px;border-radius:2px"></div>
<svg class="ic" style="left:1194px;top:187px" width="14" height="20"><path d="M4.0 6.35 L7.0 2.95 L10.0 6.35 Z" fill="#556070"/><path d="M4.0 13.45 L7.0 16.85 L10.0 13.45 Z" fill="#556070"/></svg>
<div style="left:3px;top:675px;width:1182px;height:1px;background:#fafafa"></div>
<div style="left:0px;top:208px;width:1212px;height:1px;background:#e6e2e2"></div>
<div style="left:0px;top:209px;width:1212px;height:1px;background:#fdfdfd"></div>
<div style="left:2px;top:213px;width:1184px;height:1px;background:#fbffff"></div>
<div style="left:2px;top:209px;width:1px;height:467px;background:#fbffff"></div>
<svg class="ic" style="left:3px;top:214px" width="1181" height="461" viewBox="0 0 1181 461"><rect x="0" y="0" width="1181" height="461" fill="#81fefe"/><rect x="0" y="460" width="1181" height="1" fill="#5a9ea2"/><path d="M74 418.5 H1098 M74 389.5 H1098 M74 359.5 H1098 M74 329.5 H1098 M74 300.5 H1098 M74 270.5 H1098 M74 241.5 H1098 M74 211.5 H1098 M74 181.5 H1098 M74 152.5 H1098 M74 122.5 H1098 M74 93.5 H1098 M74 63.5 H1098" stroke="#1f7d7d" stroke-width="1" stroke-dasharray="3 3" fill="none" shape-rendering="crispEdges"/><path d="M1099 433.5 h2 M1099 426.5 h2 M1099 418.5 h3 M1099 411.5 h2 M1099 403.5 h2 M1099 396.5 h2 M1099 389.5 h3 M1099 381.5 h2 M1099 374.5 h2 M1099 366.5 h2 M1099 359.5 h3 M1099 352.5 h2 M1099 344.5 h2 M1099 337.5 h2 M1099 329.5 h3 M1099 322.5 h2 M1099 315.5 h2 M1099 307.5 h2 M1099 300.5 h3 M1099 292.5 h2 M1099 285.5 h2 M1099 278.5 h2 M1099 270.5 h3 M1099 263.5 h2 M1099 255.5 h2 M1099 248.5 h2 M1099 241.5 h3 M1099 233.5 h2 M1099 226.5 h2 M1099 218.5 h2 M1099 211.5 h3 M1099 204.5 h2 M1099 196.5 h2 M1099 189.5 h2 M1099 181.5 h3 M1099 174.5 h2 M1099 167.5 h2 M1099 159.5 h2 M1099 152.5 h3 M1099 144.5 h2 M1099 137.5 h2 M1099 130.5 h2 M1099 122.5 h3 M1099 115.5 h2 M1099 107.5 h2 M1099 100.5 h2 M1099 93.5 h3 M1099 85.5 h2 M1099 78.5 h2 M1099 70.5 h2 M1099 63.5 h3 M1099 56.5 h2 M1099 48.5 h2" stroke="#1a4a4a" stroke-width="1" fill="none" shape-rendering="crispEdges" opacity=".55"/><path d="M281.5 241.0 L286.3 220.3 L293.5 220.3 L299.4 214.5 L344.4 214.5 L349.4 238.5 L351.5 241.0" stroke="#0d2a8a" stroke-width="1.2" fill="none" stroke-linejoin="round"/><path d="M930.5 241.0 L936.7 223.3 L942.4 223.3 L949.0 217.3 L993.5 217.3 L998.3 238.5 L1000.5 241.0" stroke="#0d2a8a" stroke-width="1.2" fill="none" stroke-linejoin="round"/><path d="M282 237.5 H351 M931 237.5 H1000" stroke="#20dc40" stroke-width="1.4" fill="none"/><path d="M76.0 239.4 L111.4 239.4 L112.8 241.3 L121.0 236.6 L127.5 236.2 L220.3 214.6 L274.4 214.6 L281.5 241.2 L435.0 241.2 L441.0 239.6 L460.4 231.2 L598.0 199.2 L605.6 239.5 L761.0 239.5 L764.7 241.2 L770.9 236.2 L778.6 236.2 L870.0 214.6 L923.5 214.6 L929.8 241.2 L1084.5 241.2 L1086.5 239.6 L1089.0 241.0" stroke="#9a3a2a" stroke-width="1.2" fill="none" stroke-linejoin="round"/><rect x="279.8" y="47" width="2.4" height="387" fill="#12de30"/><rect x="349.8" y="47" width="2.4" height="387" fill="#12de30"/><rect x="928.8" y="47" width="2.4" height="387" fill="#12de30"/><rect x="998.8" y="47" width="2.4" height="387" fill="#12de30"/><rect x="535" y="47" width="2" height="387" fill="#000"/><rect x="72" y="42" width="2" height="398" fill="#000"/><rect x="1097" y="42" width="2" height="398" fill="#000"/><rect x="72" y="438" width="1027" height="2" fill="#000"/></svg>
<div style="left:1190px;top:216px;width:18px;height:461px;background:#eeeeee;border-left:1px solid #b4b4b4;border-top:1px solid #9c9c9c;border-right:1px solid #fafafa;border-bottom:1px solid #fafafa"></div>
<svg class="ic" style="left:1190px;top:214px" width="18" height="463"><path d="M5 14.5 L9.5 10.5 L14 14.5 Z" fill="#8a8a8a"/><path d="M6 453.5 L13 453.5 L9.5 457.5 Z" fill="#8a8a8a"/></svg>
<div style="left:1212px;top:175px;width:1px;height:555px;background:#fafafa"></div>
<div style="left:1214px;top:181px;width:148px;height:46px;border:1px solid #e0e0e0;box-shadow:inset 1px 1px 0 #fcfcfc, 1px 1px 0 #fcfcfc"></div>
<div style="left:1222px;top:175px;width:50px;height:12px;background:#f0f0f0"></div>
<div style="left:1336px;top:174px;width:21px;height:21px;background:#f2f2f2;border:1px solid #fff;border-top:2px solid #6e6e6e;border-left:2px solid #6e6e6e"></div>
<svg class="ic" style="left:1338.6px;top:176.5px" width="16" height="17" viewBox="0 0 16 17" ><path d="M0 3.6 L3.6 4.4 L4.6 8.8 L1.6 9.6 Z" fill="#f4f03c" shape-rendering="geometricPrecision" opacity=".9"/><path d="M11.4 8.6 L11.4 5 C11.4 0.9 5 0.9 5 5.4 L5.6 6.2" fill="none" stroke="#000" stroke-width="2.9" shape-rendering="geometricPrecision" stroke-linecap="butt"/><path d="M11.4 8.6 L11.4 5 C11.4 1.4 5.2 1.4 5.2 5.3" fill="none" stroke="#cfcfcf" stroke-width="0.8" shape-rendering="geometricPrecision"/><path d="M4 7.6 L13 7.6 L15 9.6 L15 14.4 L12.8 16.7 L4.2 16.7 L2 14.4 L2 9.6 Z" fill="#000" shape-rendering="geometricPrecision"/><path d="M4.4 8.7 L12.6 8.7 L13.9 10 L13.9 14 L12.4 15.6 L4.6 15.6 L3.1 14 L3.1 10 Z" fill="#b4b4b4" shape-rendering="geometricPrecision"/><rect x="3.1" y="10.4" width="10.8" height="0.9" fill="#767676" /><rect x="3.1" y="12.8" width="10.8" height="0.9" fill="#767676" /><rect x="6.7" y="10" width="3.6" height="1.7" fill="#000" /><rect x="7.7" y="11" width="1.7" height="3.6" fill="#000" /></svg>
<div style="left:1217px;top:191px;width:13px;height:13px;border:1px solid #8e8f8f;background:linear-gradient(135deg,#d4d6d9,#f6f6f6);box-shadow:inset 0 0 0 1px #f4f4f4"></div>
<div style="left:1217px;top:207px;width:13px;height:13px;border:1px solid #8e8f8f;background:linear-gradient(135deg,#d4d6d9,#f6f6f6);box-shadow:inset 0 0 0 1px #f4f4f4"></div>
<svg class="ic" style="left:1217px;top:207px" width="13" height="13"><path d="M3.2 6.2 L5.6 9.6 L9.8 3" stroke="#33489a" stroke-width="1.8" fill="none"/></svg>
<div style="left:1293px;top:204px;width:33px;height:20px;background:#fff;border:1px solid #ececec"></div>
<div class="spin" style="left:1328px;top:205px;width:14px;height:9.0px;border-radius:2px"></div>
<div class="spin" style="left:1328px;top:215.0px;width:14px;height:9.0px;border-radius:2px"></div>
<svg class="ic" style="left:1328px;top:205px" width="14" height="19"><path d="M4.0 6.1 L7.0 2.7 L10.0 6.1 Z" fill="#556070"/><path d="M4.0 12.7 L7.0 16.1 L10.0 12.7 Z" fill="#556070"/></svg>
<div style="left:1213px;top:238px;width:149px;height:220px;border:1px solid #e0e0e0;box-shadow:inset 1px 1px 0 #fcfcfc, 1px 1px 0 #fcfcfc"></div>
<div style="left:1221px;top:232px;width:94px;height:12px;background:#f0f0f0"></div>
<div style="left:1219px;top:250px;width:142px;height:1px;background:#e2e2e2"></div>
<div style="left:1220px;top:251px;width:140px;height:1px;background:#fbfbfb"></div>
<div style="left:1219px;top:250px;width:1px;height:140px;background:#d2d2d2"></div>
<div style="left:1220px;top:251px;width:1px;height:138px;background:#fbfbfb"></div>
<div style="left:1360px;top:251px;width:1px;height:139px;background:#a8a8a8"></div>
<div style="left:1219px;top:279px;width:142px;height:1px;background:#a0a0a0"></div>
<div style="left:1219px;top:280px;width:142px;height:1px;background:#fff"></div>
<div style="left:1219px;top:355px;width:142px;height:1px;background:#a0a0a0"></div>
<div style="left:1219px;top:356px;width:142px;height:1px;background:#fff"></div>
<div style="left:1219px;top:388px;width:142px;height:1px;background:#a0a0a0"></div>
<div style="left:1219px;top:389px;width:142px;height:1px;background:#fff"></div>
<div style="left:1223px;top:261px;width:12px;height:12px;border:1px solid #8e8f8f;border-radius:6px;background:radial-gradient(circle at 60% 60%,#fdfdfd,#d6d8da)"></div>
<div style="left:1281px;top:261px;width:12px;height:12px;border:1px solid #8e8f8f;border-radius:6px;background:radial-gradient(circle at 60% 60%,#fdfdfd,#d6d8da)"></div>
<div style="left:1283.5px;top:263.5px;width:7px;height:7px;border-radius:4px;background:radial-gradient(circle at 40% 35%,#c4ecf9 0,#3b9bd6 40%,#123f74 92%)"></div>
<div style="left:1223px;top:285.5px;width:12px;height:12px;border:1px solid #8e8f8f;border-radius:6px;background:radial-gradient(circle at 60% 60%,#fdfdfd,#d6d8da)"></div>
<div style="left:1310px;top:285px;width:13px;height:13px;border:1px solid #8e8f8f;background:linear-gradient(135deg,#d4d6d9,#f6f6f6);box-shadow:inset 0 0 0 1px #f4f4f4"></div>
<svg class="ic" style="left:1310px;top:285px" width="13" height="13"><path d="M3.2 6.2 L5.6 9.6 L9.8 3" stroke="#33489a" stroke-width="1.8" fill="none"/></svg>
<div style="left:1223px;top:303.5px;width:12px;height:12px;border:1px solid #8e8f8f;border-radius:6px;background:radial-gradient(circle at 60% 60%,#fdfdfd,#d6d8da)"></div>
<div style="left:1225.5px;top:306.0px;width:7px;height:7px;border-radius:4px;background:radial-gradient(circle at 40% 35%,#c4ecf9 0,#3b9bd6 40%,#123f74 92%)"></div>
<div style="left:1223px;top:321.5px;width:12px;height:12px;border:1px solid #8e8f8f;border-radius:6px;background:radial-gradient(circle at 60% 60%,#fdfdfd,#d6d8da)"></div>
<div style="left:1223px;top:338.5px;width:12px;height:12px;border:1px solid #8e8f8f;border-radius:6px;background:radial-gradient(circle at 60% 60%,#fdfdfd,#d6d8da)"></div>
<div style="left:1311px;top:363px;width:40px;height:21px;background:#fff;border:1px solid #ececec"></div>
<div style="left:1335px;top:365px;width:14px;height:17px;background:#f4f4f4;border:1px solid #c8c8c8"></div>
<svg class="ic" style="left:1335px;top:365px" width="14" height="17"><path d="M3 6.5 L7 2.5 L11 6.5 Z M3 10.5 L11 10.5 L7 14.5 Z" fill="#000"/><path d="M1 8.5 H13" stroke="#c8c8c8"/></svg>
<div style="left:1223px;top:397px;width:13px;height:13px;border:1px solid #8e8f8f;background:linear-gradient(135deg,#d4d6d9,#f6f6f6);box-shadow:inset 0 0 0 1px #f4f4f4"></div>
<svg class="ic" style="left:1223px;top:397px" width="13" height="13"><path d="M3.2 6.2 L5.6 9.6 L9.8 3" stroke="#33489a" stroke-width="1.8" fill="none"/></svg>
<div style="left:1223px;top:413.5px;width:13px;height:13px;border:1px solid #8e8f8f;background:linear-gradient(135deg,#d4d6d9,#f6f6f6);box-shadow:inset 0 0 0 1px #f4f4f4"></div>
<svg class="ic" style="left:1223px;top:413.5px" width="13" height="13"><path d="M3.2 6.2 L5.6 9.6 L9.8 3" stroke="#33489a" stroke-width="1.8" fill="none"/></svg>
<div style="left:1277px;top:433px;width:73px;height:14px;background:#e7e7e8;border:1px solid;border-color:#b0b0b0 #fff #fff #b0b0b0"></div>
<div style="left:1274px;top:431px;width:9px;height:19px;border:1px solid #5c5c5c;border-radius:2px;background:linear-gradient(#f4f4f4,#d6d6d6);box-shadow:inset 0 0 0 1px #fff"></div>
<div style="left:1223px;top:658px;width:121px;height:1px;background:#949494"></div>
<div style="left:1223px;top:658px;width:1px;height:71px;background:#949494"></div>
<div style="left:1224px;top:659px;width:119px;height:1px;background:#f8f8f8"></div>
<div style="left:1224px;top:659px;width:1px;height:70px;background:#f8f8f8"></div>
<svg class="ic" style="left:1275.6px;top:708px" width="16" height="17" viewBox="0 0 16 17" ><path d="M6 0.8 L12.8 0.8 L16.2 4.6 L16.2 17 L6 17 Z" fill="#000" shape-rendering="geometricPrecision"/><path d="M7.2 2 L12.2 2 L15 5.2 L15 15.8 L7.2 15.8 Z" fill="#fff" shape-rendering="geometricPrecision"/><path d="M12.2 1.4 L12.2 5 L15.6 5" fill="none" stroke="#000" stroke-width="1" shape-rendering="geometricPrecision"/><rect x="9.4" y="3.6" width="2" height="1" fill="#000" /><rect x="12" y="6.8" width="2" height="1" fill="#000" /><rect x="12.4" y="10" width="1.6" height="1" fill="#000" /><rect x="9.8" y="13.4" width="1.4" height="1.1" fill="#000" /><rect x="12.4" y="13.4" width="1.6" height="1.1" fill="#000" /><path d="M2.6 1.6 L13 12.4" fill="none" stroke="#000" stroke-width="2.0" shape-rendering="geometricPrecision"/><path d="M3.2 2.4 L12 11.6" fill="none" stroke="#8c8a3c" stroke-width="0.7" shape-rendering="geometricPrecision"/><path d="M2.4 8.6 L4.6 7 L8.6 7.8 L11 10 L8.4 10.4 L9.6 11.6 L8 12.2 L9 13.2 L7.4 14 L8 15 L4.4 15 L2.4 13.6 Z" fill="#000" shape-rendering="geometricPrecision"/><path d="M3.3 9 L4.9 8 L7 8.6 L6.4 10.2 L7.2 11.4 L6 12.2 L6.6 13.4 L5.4 14 L4.6 14 L3.3 13 Z" fill="#ece68e" shape-rendering="geometricPrecision"/><rect x="0.9" y="7.4" width="1.5" height="7" fill="#000" /><rect x="0.3" y="7.2" width="2.6" height="0.9" fill="#000" /><rect x="0.3" y="13.8" width="2.6" height="0.9" fill="#000" /><rect x="0" y="8.4" width="0.9" height="5" fill="#7adcb4" /></svg>
<div class="btn" style="left:3px;top:683px;width:22px;height:42px;"></div>
<div class="btn" style="left:28px;top:683px;width:22px;height:42px;"></div>
<div style="left:52px;top:683px;width:771px;height:22px;background:#ededed;border:1px solid #b4b4b4;border-right-color:#e0e0e0;border-bottom-color:#c0c0c0"></div>
<div style="left:52px;top:705px;width:771px;height:21px;background:#ededed;border-left:1px solid #b4b4b4;border-bottom:1px solid #fdfdfd"></div>
<div style="left:54px;top:685px;width:16px;height:18px;border:1px solid #979797;border-radius:2px;background:linear-gradient(#f3f3f3 0,#e9e9e9 48%,#d9d9d9 52%,#cdcdcd 100%);box-shadow:inset 0 0 0 1px #fbfbfb"></div>
<div style="left:806px;top:685px;width:16px;height:18px;border:1px solid #979797;border-radius:2px;background:linear-gradient(#f3f3f3 0,#e9e9e9 48%,#d9d9d9 52%,#cdcdcd 100%);box-shadow:inset 0 0 0 1px #fbfbfb"></div>
<div style="left:707px;top:685px;width:15px;height:18px;border:1px solid #3c7fb1;border-radius:2px;background:linear-gradient(#d9eefb 0,#c3e5f8 48%,#a5d5f0 52%,#a0d0ec 100%);box-shadow:inset 0 0 0 1px #eaf6fd"></div>
<div style="left:707px;top:707px;width:15px;height:18px;border:1px solid #979797;border-radius:2px;background:linear-gradient(#f3f3f3 0,#e9e9e9 48%,#d9d9d9 52%,#cdcdcd 100%);box-shadow:inset 0 0 0 1px #fbfbfb"></div>
<svg class="ic" style="left:52px;top:683px" width="771" height="43"><g fill="#3a3a3a"><path d="M10.5 6.5 L10.5 13.5 L6.5 10 Z"/><path d="M10.5 28.5 L10.5 35.5 L6.5 32 Z"/><path d="M760.5 6.5 L760.5 13.5 L764.5 10 Z"/><path d="M760.5 28.5 L760.5 35.5 L764.5 32 Z"/></g></svg>
<div class="btn" style="left:826px;top:683px;width:22px;height:42px;"></div>
<div class="btn" style="left:852px;top:683px;width:22px;height:42px;"></div>
<div class="btn" style="left:879px;top:683px;width:22px;height:42px;"></div>
<div class="btn" style="left:905px;top:683px;width:22px;height:42px;"></div>
<div class="btn" style="left:933px;top:683px;width:58px;height:20px;"></div>
<div class="btn" style="left:933px;top:705px;width:58px;height:20px;"></div>
<svg class="ic" style="left:937px;top:684px" width="16" height="17" viewBox="0 0 16 17" ><path d="M0 3.6 L3.6 4.4 L4.6 8.8 L1.6 9.6 Z" fill="#f4f03c" shape-rendering="geometricPrecision" opacity=".9"/><path d="M11.4 8.6 L11.4 5 C11.4 0.9 5 0.9 5 5.4 L5.6 6.2" fill="none" stroke="#000" stroke-width="2.9" shape-rendering="geometricPrecision" stroke-linecap="butt"/><path d="M11.4 8.6 L11.4 5 C11.4 1.4 5.2 1.4 5.2 5.3" fill="none" stroke="#cfcfcf" stroke-width="0.8" shape-rendering="geometricPrecision"/><path d="M4 7.6 L13 7.6 L15 9.6 L15 14.4 L12.8 16.7 L4.2 16.7 L2 14.4 L2 9.6 Z" fill="#000" shape-rendering="geometricPrecision"/><path d="M4.4 8.7 L12.6 8.7 L13.9 10 L13.9 14 L12.4 15.6 L4.6 15.6 L3.1 14 L3.1 10 Z" fill="#b4b4b4" shape-rendering="geometricPrecision"/><rect x="3.1" y="10.4" width="10.8" height="0.9" fill="#767676" /><rect x="3.1" y="12.8" width="10.8" height="0.9" fill="#767676" /><rect x="6.7" y="10" width="3.6" height="1.7" fill="#000" /><rect x="7.7" y="11" width="1.7" height="3.6" fill="#000" /></svg>
<svg class="ic" style="left:937px;top:706px" width="16" height="17" viewBox="0 0 16 17" ><path d="M0 3.6 L3.6 4.4 L4.6 8.8 L1.6 9.6 Z" fill="#f4f03c" shape-rendering="geometricPrecision" opacity=".9"/><path d="M11.4 8.6 L11.4 5 C11.4 0.9 5 0.9 5 5.4 L5.6 6.2" fill="none" stroke="#000" stroke-width="2.9" shape-rendering="geometricPrecision" stroke-linecap="butt"/><path d="M11.4 8.6 L11.4 5 C11.4 1.4 5.2 1.4 5.2 5.3" fill="none" stroke="#cfcfcf" stroke-width="0.8" shape-rendering="geometricPrecision"/><path d="M4 7.6 L13 7.6 L15 9.6 L15 14.4 L12.8 16.7 L4.2 16.7 L2 14.4 L2 9.6 Z" fill="#000" shape-rendering="geometricPrecision"/><path d="M4.4 8.7 L12.6 8.7 L13.9 10 L13.9 14 L12.4 15.6 L4.6 15.6 L3.1 14 L3.1 10 Z" fill="#b4b4b4" shape-rendering="geometricPrecision"/><rect x="3.1" y="10.4" width="10.8" height="0.9" fill="#767676" /><rect x="3.1" y="12.8" width="10.8" height="0.9" fill="#767676" /><rect x="6.7" y="10" width="3.6" height="1.7" fill="#000" /><rect x="7.7" y="11" width="1.7" height="3.6" fill="#000" /></svg>
<div class="btn" style="left:995px;top:683px;width:22px;height:42px;"></div>
<svg class="ic" style="left:998px;top:696px" width="16" height="16" viewBox="0 0 16 16" ><rect x="1" y="1.2" width="1.8" height="12.6" fill="#000" /><rect x="1" y="12.6" width="14" height="1.4" fill="#000" /><rect x="0" y="2.4" width="1" height="0.9" fill="#333" /><rect x="0" y="4.6" width="1" height="0.9" fill="#333" /><rect x="0" y="6.8" width="1" height="0.9" fill="#333" /><rect x="0" y="9" width="1" height="0.9" fill="#333" /><rect x="0" y="11.2" width="1" height="0.9" fill="#333" /><rect x="3.4" y="14" width="0.9" height="1.3" fill="#333" /><rect x="5.8" y="14" width="0.9" height="1.3" fill="#333" /><rect x="8.2" y="14" width="0.9" height="1.3" fill="#333" /><rect x="10.6" y="14" width="0.9" height="1.3" fill="#333" /><rect x="13" y="14" width="0.9" height="1.3" fill="#333" /><rect x="3.4" y="3.0" width="11.6" height="1.8" fill="#1414d4" /><path d="M2.8 3.9 L8.4 1.0 L8.4 6.8 Z" fill="#1414d4" shape-rendering="geometricPrecision"/><rect x="3.4" y="9.299999999999999" width="11.6" height="1.8" fill="#d41414" /><path d="M2.8 10.2 L8.4 7.6 L8.4 12.799999999999999 Z" fill="#d41414" shape-rendering="geometricPrecision"/></svg>
<svg class="ic" style="left:0px;top:682px" width="930" height="42"><g fill="#000"><rect x="6" y="18" width="2" height="7"/><path d="M14 18 v7 l-4.3 -3.5 Z M19.4 18 v7 l-4.3 -3.5 Z"/><path d="M36.8 18 v7 l-4.2 -3.5 Z"/><path d="M836 18 v7 l4.3 -3.5 Z"/><path d="M855.8 18 v7 l4.3 -3.5 Z M861 18 v7 l4.3 -3.5 Z"/><rect x="867" y="18" width="2" height="7"/><path d="M886.3 18 v7 l-4.3 -3.5 Z"/><path d="M917.2 18 v7 l4.3 -3.5 Z"/></g><rect x="38.7" y="18" width="2.4" height="7" fill="#10106c"/><rect x="832" y="18" width="2" height="7" fill="#1010d0"/><rect x="888" y="18" width="2" height="7" fill="#1010b0"/><rect x="891.2" y="18" width="2" height="7" fill="#b02818"/><rect x="910" y="18" width="2" height="7" fill="#c01828"/><rect x="913.2" y="18" width="2" height="7" fill="#10106c"/></svg>
<div style="left:1025px;top:685px;width:188px;height:40px;border:1px solid #dcdcdc;box-shadow:inset 1px 1px 0 #fff, 1px 1px 0 #fff"></div>
<div style="left:1033px;top:679px;width:52px;height:12px;background:#f0f0f0"></div>
<div style="left:1030px;top:697px;width:65px;height:20px;background:#fff;border:1px solid #ececec;border-top-color:#c8c8c8"></div>
<svg class="ic" style="left:1102px;top:699px" width="16" height="16" viewBox="0 0 16 16" ><rect x="0.1" y="0.9" width="2.7" height="12.4" fill="#157d19" /><rect x="0.1" y="13.1" width="16" height="1.2" fill="#000" /><rect x="2.4" y="14.2" width="0.9" height="1.2" fill="#333" /><rect x="4.8" y="14.2" width="0.9" height="1.2" fill="#333" /><rect x="7.2" y="14.2" width="0.9" height="1.2" fill="#333" /><rect x="9.6" y="14.2" width="0.9" height="1.2" fill="#333" /><rect x="12" y="14.2" width="0.9" height="1.2" fill="#333" /><rect x="14.2" y="14.2" width="0.9" height="1.2" fill="#333" /><rect x="3.4" y="3.3000000000000003" width="12.4" height="1.8" fill="#1010c8" /><path d="M2.8 4.2 L8 1.4000000000000004 L8 7.0 Z" fill="#1010c8" shape-rendering="geometricPrecision"/><rect x="3.4" y="8.9" width="12.4" height="1.8" fill="#d81414" /><path d="M2.8 9.8 L8 7.200000000000001 L8 12.4 Z" fill="#d81414" shape-rendering="geometricPrecision"/></svg>
<svg class="ic" style="left:1125px;top:699px" width="16" height="16" viewBox="0 0 16 16" ><rect x="13.4" y="0.9" width="2.7" height="12.4" fill="#157d19" /><rect x="0.1" y="13.1" width="16" height="1.2" fill="#000" /><rect x="2.4" y="14.2" width="0.9" height="1.2" fill="#333" /><rect x="4.8" y="14.2" width="0.9" height="1.2" fill="#333" /><rect x="7.2" y="14.2" width="0.9" height="1.2" fill="#333" /><rect x="9.6" y="14.2" width="0.9" height="1.2" fill="#333" /><rect x="12" y="14.2" width="0.9" height="1.2" fill="#333" /><rect x="14.2" y="14.2" width="0.9" height="1.2" fill="#333" /><rect x="0.4" y="3.3000000000000003" width="12.2" height="1.8" fill="#1010c8" /><path d="M13.2 4.2 L8.2 1.4000000000000004 L8.2 7.0 Z" fill="#1010c8" shape-rendering="geometricPrecision"/><rect x="0.4" y="8.9" width="12.2" height="1.8" fill="#d81414" /><path d="M13.2 9.8 L8.2 7.200000000000001 L8.2 12.4 Z" fill="#d81414" shape-rendering="geometricPrecision"/></svg>
<div style="left:1147px;top:697px;width:1px;height:20px;background:#9a9a9a"></div>
<div style="left:1150px;top:697px;width:1px;height:20px;background:#9a9a9a"></div>
<svg class="ic" style="left:1157px;top:696px" width="16" height="20" viewBox="0 0 16 20" ><path d="M2.6 14.3 L8 10.6 L8 12.9 L14.8 12.9 L14.8 15.7 L8 15.7 L8 18 Z" fill="#34e6f0" shape-rendering="geometricPrecision"/></svg>
<svg class="ic" style="left:1179px;top:696px" width="16" height="20" viewBox="0 0 16 20" ><path d="M12.6 14.3 L7.2 10.6 L7.2 12.9 L0.4 12.9 L0.4 15.7 L7.2 15.7 L7.2 18 Z" fill="#34e6f0" shape-rendering="geometricPrecision"/></svg>
<div style="left:1213px;top:678px;width:1px;height:51px;background:#fafafa"></div>
<div style="left:0px;top:729px;width:1363px;height:1px;background:#9c9c9c"></div>
<div style="left:0px;top:730px;width:1363px;height:16px;background:#f0eded"></div>
<div style="left:349px;top:731px;width:1px;height:15px;background:#d4d0d0"></div>
<div style="left:668px;top:731px;width:1px;height:15px;background:#d4d0d0"></div>
<span class="t" style='left:7.2px;top:6.00px;font:12px "Liberation Sans",sans-serif;color:#101018;letter-spacing:-0.236px;'>File</span>
<span class="t" style='left:39.0px;top:6.00px;font:12px "Liberation Sans",sans-serif;color:#101018;letter-spacing:-0.232px;'>Finestre</span>
<span class="t" style='left:93.7px;top:6.00px;font:12px "Liberation Sans",sans-serif;color:#101018;letter-spacing:0.105px;'>Strumenti</span>
<span class="t" style='left:159.8px;top:6.00px;font:12px "Liberation Sans",sans-serif;color:#101018;letter-spacing:-0.083px;'>Variazione manuale</span>
<span class="t" style='left:277.2px;top:6.00px;font:12px "Liberation Sans",sans-serif;color:#101018;letter-spacing:0.357px;'>Movimenti</span>
<span class="t" style='left:348.7px;top:6.00px;font:12px "Liberation Sans",sans-serif;color:#101018;letter-spacing:-0.324px;'>Selezione</span>
<span class="t" style='left:411.8px;top:6.00px;font:12px "Liberation Sans",sans-serif;color:#101018;'>BitPower</span>
<span class="t" style='left:472.9px;top:6.00px;font:12px "Liberation Sans",sans-serif;color:#101018;letter-spacing:-0.289px;'>Vai a ...</span>
<span class="t" style='left:525px;top:35.00px;font:bold 12px "Liberation Sans",sans-serif;color:#000;letter-spacing:-0.629px;-webkit-text-stroke:.3px;'>SCAN</span>
<span class="t" style='left:631.5px;top:35.00px;font:bold 12px "Liberation Sans",sans-serif;color:#000;letter-spacing:-0.224px;-webkit-text-stroke:.3px;'>EMU</span>
<span class="t" style='left:690.5px;top:35.00px;font:bold 12px "Liberation Sans",sans-serif;color:#000;letter-spacing:-0.115px;-webkit-text-stroke:.3px;'>REC</span>
<span class="t" style='left:21.5px;top:69.00px;font:bold 12px "Liberation Sans",sans-serif;color:#000;letter-spacing:-0.200px;-webkit-text-stroke:.3px;'>Mod.:</span>
<span class="t" style='left:61px;top:70.50px;font:8.5px "DejaVu Sans","Liberation Sans",sans-serif;color:#909090;letter-spacing:0.797px;'>SI</span>
<span class="t" style='left:96.5px;top:69.00px;font:bold 13px "Liberation Sans",sans-serif;color:#000;letter-spacing:0.151px;-webkit-text-stroke:.3px;'>+ -</span>
<span class="t" style='left:122px;top:68.00px;font:12px "Liberation Sans",sans-serif;color:#000;'>1</span>
<span class="t" style='left:191px;top:69.00px;font:bold 12px "Liberation Sans",sans-serif;color:#000;letter-spacing:-0.145px;-webkit-text-stroke:.3px;'>Pg+ Pg-</span>
<span class="t" style='left:245.5px;top:68.00px;font:12px "Liberation Sans",sans-serif;color:#000;'>5</span>
<span class="t" style='left:342.5px;top:68.00px;font:12px "Liberation Sans",sans-serif;color:#000;'>1</span>
<span class="t" style='left:13.5px;top:94.00px;font:bold 11.8px "Liberation Sans",sans-serif;color:#000;letter-spacing:0.162px;-webkit-text-stroke:.3px;'>Dati caricati</span>
<span class="t" style='left:1170px;top:95.00px;font:bold 11px "DejaVu Sans Condensed","DejaVu Sans",sans-serif;color:#000;letter-spacing:0.038px;'>Selezione</span>
<span class="t" style='left:13px;top:126.00px;font:bold 11.8px "Liberation Sans",sans-serif;color:#000;letter-spacing:-0.127px;-webkit-text-stroke:.3px;'>Originale</span>
<span class="t" style='left:8.5px;top:148.00px;font:bold 11.8px "Liberation Sans",sans-serif;color:#063806;letter-spacing:-0.098px;-webkit-text-stroke:.3px;'>Modificato</span>
<span class="t" style='left:79.5px;top:127.00px;font:11px "Liberation Sans",sans-serif;color:#15157a;letter-spacing:-0.200px;'>bravo.ori</span>
<span class="t" style='left:79.5px;top:149.20px;font:11px "Liberation Sans",sans-serif;color:#a42a2a;letter-spacing:-0.240px;'>BRAVO.mod</span>
<span class="t" style='left:741.5px;top:106.00px;font:11px "Liberation Sans",sans-serif;color:#000;letter-spacing:-0.292px;'>Offset ORI-MOD</span>
<span class="t" style='left:832.5px;top:104.50px;font:bold 11.8px "Liberation Sans",sans-serif;color:#000;letter-spacing:0.438px;-webkit-text-stroke:.3px;'>000000</span>
<span class="t" style='left:883px;top:105.00px;font:bold 11.8px "Liberation Sans",sans-serif;color:#000;letter-spacing:-0.205px;-webkit-text-stroke:.3px;'>Indirizzo</span>
<span class="t" style='left:966.5px;top:105.00px;font:bold 11.8px "Liberation Sans",sans-serif;color:#000;letter-spacing:0.281px;-webkit-text-stroke:.3px;'>Dec</span>
<span class="t" style='left:1043.6px;top:105.00px;font:bold 11.8px "Liberation Sans",sans-serif;color:#000;letter-spacing:-0.133px;-webkit-text-stroke:.3px;'>Esa</span>
<span class="t" style='left:1095.5px;top:105.00px;font:bold 11.8px "Liberation Sans",sans-serif;color:#000;letter-spacing:0.095px;-webkit-text-stroke:.3px;'>Differenza</span>
<span class="t" style='left:885.5px;top:127.00px;font:11px "Liberation Sans",sans-serif;color:#15157a;letter-spacing:-0.534px;'>1C4BBE</span>
<span class="t" style='left:885.5px;top:149.20px;font:11px "Liberation Sans",sans-serif;color:#a42a2a;letter-spacing:-0.534px;'>1C4BBE</span>
<span class="t" style='left:941.5px;top:127.00px;font:11px "Liberation Sans",sans-serif;color:#15157a;letter-spacing:-0.111px;'>4500,0000</span>
<span class="t" style='left:941.5px;top:149.20px;font:11px "Liberation Sans",sans-serif;color:#a42a2a;letter-spacing:-0.111px;'>4500,0000</span>
<span class="t" style='left:1034.5px;top:127.00px;font:11px "Liberation Sans",sans-serif;color:#15157a;letter-spacing:-0.164px;'>1194</span>
<span class="t" style='left:1034.5px;top:149.20px;font:11px "Liberation Sans",sans-serif;color:#a42a2a;letter-spacing:-0.164px;'>1194</span>
<span class="t" style='left:1099.5px;top:127.00px;font:11px "Liberation Sans",sans-serif;color:#000;letter-spacing:-0.109px;'>0,0000</span>
<span class="t" style='left:1099.5px;top:149.20px;font:11px "Liberation Sans",sans-serif;color:#000;letter-spacing:-0.099px;'>0,0</span>
<span class="t" style='left:1145px;top:150.00px;font:bold 11.8px "Liberation Sans",sans-serif;color:#000;letter-spacing:-1.500px;-webkit-text-stroke:.3px;'>%</span>
<span class="t" style='left:1166.5px;top:120.00px;font:11px "Liberation Sans",sans-serif;color:#087808;letter-spacing:-0.331px;'>1C4B6E</span>
<span class="t" style='left:1218px;top:120.00px;font:11px "Liberation Sans",sans-serif;color:#087808;letter-spacing:-0.128px;'>1C4B84</span>
<span class="t" style='left:1270.5px;top:120.00px;font:11px "Liberation Sans",sans-serif;color:#000;'>2</span>
<span class="t" style='left:1295px;top:122.00px;font:bold 11px "DejaVu Sans Condensed","DejaVu Sans",sans-serif;color:#000;letter-spacing:-0.262px;'>dim.</span>
<span class="t" style='left:1325.5px;top:120.00px;font:11px "Liberation Sans",sans-serif;color:#000;'>12</span>
<span class="t" style='left:7.5px;top:189.00px;font:bold 11.8px "Liberation Sans",sans-serif;color:#000;letter-spacing:0.277px;-webkit-text-stroke:.3px;'>Zoom H: 16</span>
<span class="t" style='left:1083.5px;top:189.00px;font:bold 11.8px "Liberation Sans",sans-serif;color:#000;letter-spacing:0.438px;-webkit-text-stroke:.3px;'>256</span>
<span class="t" style='left:1119.5px;top:189.00px;font:bold 11.8px "Liberation Sans",sans-serif;color:#000;letter-spacing:0.271px;-webkit-text-stroke:.3px;'>160</span>
<span class="t" style='left:1152px;top:189.00px;font:bold 11.8px "Liberation Sans",sans-serif;color:#000;letter-spacing:-0.562px;-webkit-text-stroke:.3px;'>x</span>
<span class="t" style='left:1166px;top:189.00px;font:bold 11.8px "Liberation Sans",sans-serif;color:#000;-webkit-text-stroke:.3px;'>1</span>
<span class="t" style='left:0px;top:626.00px;font:10.5px "Liberation Sans",sans-serif;color:#0a1a1a;left:auto;right:1292.2px;'>-30.000</span>
<span class="t" style='left:1106.3px;top:626.00px;font:10.5px "Liberation Sans",sans-serif;color:#0a1a1a;'>-30.000</span>
<span class="t" style='left:0px;top:597.00px;font:10.5px "Liberation Sans",sans-serif;color:#0a1a1a;left:auto;right:1292.2px;'>-25.000</span>
<span class="t" style='left:1106.3px;top:597.00px;font:10.5px "Liberation Sans",sans-serif;color:#0a1a1a;'>-25.000</span>
<span class="t" style='left:0px;top:567.00px;font:10.5px "Liberation Sans",sans-serif;color:#0a1a1a;left:auto;right:1292.2px;'>-20.000</span>
<span class="t" style='left:1106.3px;top:567.00px;font:10.5px "Liberation Sans",sans-serif;color:#0a1a1a;'>-20.000</span>
<span class="t" style='left:0px;top:537.00px;font:10.5px "Liberation Sans",sans-serif;color:#0a1a1a;left:auto;right:1292.2px;'>-15.000</span>
<span class="t" style='left:1106.3px;top:537.00px;font:10.5px "Liberation Sans",sans-serif;color:#0a1a1a;'>-15.000</span>
<span class="t" style='left:0px;top:508.00px;font:10.5px "Liberation Sans",sans-serif;color:#0a1a1a;left:auto;right:1292.2px;'>-10.000</span>
<span class="t" style='left:1106.3px;top:508.00px;font:10.5px "Liberation Sans",sans-serif;color:#0a1a1a;'>-10.000</span>
<span class="t" style='left:0px;top:478.00px;font:10.5px "Liberation Sans",sans-serif;color:#0a1a1a;left:auto;right:1292.2px;'>-5.000</span>
<span class="t" style='left:1106.3px;top:478.00px;font:10.5px "Liberation Sans",sans-serif;color:#0a1a1a;'>-5.000</span>
<span class="t" style='left:0px;top:449.00px;font:10.5px "Liberation Sans",sans-serif;color:#0a1a1a;left:auto;right:1292.2px;'>0</span>
<span class="t" style='left:1106.3px;top:449.00px;font:10.5px "Liberation Sans",sans-serif;color:#0a1a1a;'>0</span>
<span class="t" style='left:0px;top:419.00px;font:10.5px "Liberation Sans",sans-serif;color:#0a1a1a;left:auto;right:1292.2px;'>5.000</span>
<span class="t" style='left:1106.3px;top:419.00px;font:10.5px "Liberation Sans",sans-serif;color:#0a1a1a;'>5.000</span>
<span class="t" style='left:0px;top:389.00px;font:10.5px "Liberation Sans",sans-serif;color:#0a1a1a;left:auto;right:1292.2px;'>10.000</span>
<span class="t" style='left:1106.3px;top:389.00px;font:10.5px "Liberation Sans",sans-serif;color:#0a1a1a;'>10.000</span>
<span class="t" style='left:0px;top:360.00px;font:10.5px "Liberation Sans",sans-serif;color:#0a1a1a;left:auto;right:1292.2px;'>15.000</span>
<span class="t" style='left:1106.3px;top:360.00px;font:10.5px "Liberation Sans",sans-serif;color:#0a1a1a;'>15.000</span>
<span class="t" style='left:0px;top:330.00px;font:10.5px "Liberation Sans",sans-serif;color:#0a1a1a;left:auto;right:1292.2px;'>20.000</span>
<span class="t" style='left:1106.3px;top:330.00px;font:10.5px "Liberation Sans",sans-serif;color:#0a1a1a;'>20.000</span>
<span class="t" style='left:0px;top:301.00px;font:10.5px "Liberation Sans",sans-serif;color:#0a1a1a;left:auto;right:1292.2px;'>25.000</span>
<span class="t" style='left:1106.3px;top:301.00px;font:10.5px "Liberation Sans",sans-serif;color:#0a1a1a;'>25.000</span>
<span class="t" style='left:0px;top:271.00px;font:10.5px "Liberation Sans",sans-serif;color:#0a1a1a;left:auto;right:1292.2px;'>30.000</span>
<span class="t" style='left:1106.3px;top:271.00px;font:10.5px "Liberation Sans",sans-serif;color:#0a1a1a;'>30.000</span>
<span class="t" style='left:264.5px;top:657.40px;font:10.5px "Liberation Sans",sans-serif;color:#0a1a1a;letter-spacing:-0.268px;'>1C4B6E</span>
<span class="t" style='left:334.5px;top:657.40px;font:10.5px "Liberation Sans",sans-serif;color:#0a1a1a;letter-spacing:-0.076px;'>1C4B84</span>
<span class="t" style='left:913px;top:657.40px;font:10.5px "Liberation Sans",sans-serif;color:#0a1a1a;letter-spacing:-0.367px;'>1C4C3A</span>
<span class="t" style='left:984px;top:657.40px;font:10.5px "Liberation Sans",sans-serif;color:#0a1a1a;letter-spacing:-0.172px;'>1C4C50</span>
<span class="t" style='left:1225.5px;top:174.00px;font:bold 11.8px "Liberation Sans",sans-serif;color:#000;letter-spacing:-0.321px;-webkit-text-stroke:.3px;'>Cursore</span>
<span class="t" style='left:1233.8px;top:191.00px;font:bold 11.8px "Liberation Sans",sans-serif;color:#000;letter-spacing:0.216px;-webkit-text-stroke:.3px;'>ORI &gt;&gt; MOD</span>
<span class="t" style='left:1233.8px;top:206.50px;font:bold 11.8px "Liberation Sans",sans-serif;color:#000;letter-spacing:0.178px;-webkit-text-stroke:.3px;'>Max var.</span>
<span class="t" style='left:1297px;top:206.50px;font:bold 11.8px "Liberation Sans",sans-serif;color:#000;letter-spacing:-0.062px;-webkit-text-stroke:.3px;'>15</span>
<span class="t" style='left:1225px;top:232.00px;font:bold 11px "DejaVu Sans Condensed","DejaVu Sans",sans-serif;color:#000;letter-spacing:0.090px;'>Visualizzazione</span>
<span class="t" style='left:1239.5px;top:260.00px;font:bold 11.8px "Liberation Sans",sans-serif;color:#000;letter-spacing:0.027px;-webkit-text-stroke:.3px;'>IEEE</span>
<span class="t" style='left:1298px;top:260.00px;font:bold 11.8px "Liberation Sans",sans-serif;color:#000;letter-spacing:-0.227px;-webkit-text-stroke:.3px;'>Motorola</span>
<span class="t" style='left:1239.5px;top:284.50px;font:bold 11.8px "Liberation Sans",sans-serif;color:#000;letter-spacing:0.147px;-webkit-text-stroke:.3px;'>8 bit</span>
<span class="t" style='left:1327px;top:284.50px;font:bold 11.8px "Liberation Sans",sans-serif;color:#000;letter-spacing:0.630px;-webkit-text-stroke:.3px;'>+/-</span>
<span class="t" style='left:1239.5px;top:302.50px;font:bold 11.8px "Liberation Sans",sans-serif;color:#000;letter-spacing:0.198px;-webkit-text-stroke:.3px;'>16 bit</span>
<span class="t" style='left:1239.5px;top:320.50px;font:bold 11.8px "Liberation Sans",sans-serif;color:#000;letter-spacing:0.198px;-webkit-text-stroke:.3px;'>32 bit</span>
<span class="t" style='left:1239.5px;top:337.50px;font:bold 11.8px "Liberation Sans",sans-serif;color:#000;letter-spacing:-0.148px;-webkit-text-stroke:.3px;'>Virgola mobile</span>
<span class="t" style='left:1223px;top:366.00px;font:bold 11.8px "Liberation Sans",sans-serif;color:#000;letter-spacing:-0.231px;-webkit-text-stroke:.3px;'>Allineamento:</span>
<span class="t" style='left:1315px;top:366.00px;font:bold 11.8px "Liberation Sans",sans-serif;color:#000;-webkit-text-stroke:.3px;'>0</span>
<span class="t" style='left:1239.5px;top:397.00px;font:bold 11.8px "Liberation Sans",sans-serif;color:#000;letter-spacing:-0.007px;-webkit-text-stroke:.3px;'>Usa info driver</span>
<span class="t" style='left:1239.5px;top:413.00px;font:bold 11.8px "Liberation Sans",sans-serif;color:#000;letter-spacing:-0.092px;-webkit-text-stroke:.3px;'>Usa ultima mappa</span>
<span class="t" style='left:1220.7px;top:438.00px;font:bold 11px "DejaVu Sans Condensed","DejaVu Sans",sans-serif;color:#000;letter-spacing:-0.237px;'>Zoom V:</span>
<span class="t" style='left:1224.6px;top:644.00px;font:bold 11px "DejaVu Sans Condensed","DejaVu Sans",sans-serif;color:#000;letter-spacing:-0.016px;'>Memo indirizzi</span>
<span class="t" style='left:1233.7px;top:665.60px;font:bold 12px "DejaVu Sans Condensed","DejaVu Sans",sans-serif;color:#a4a4a4;letter-spacing:0.084px;'>1</span>
<span class="t" style='left:1256.8px;top:665.60px;font:bold 12px "DejaVu Sans Condensed","DejaVu Sans",sans-serif;color:#a4a4a4;letter-spacing:0.084px;'>2</span>
<span class="t" style='left:1279.9px;top:665.60px;font:bold 12px "DejaVu Sans Condensed","DejaVu Sans",sans-serif;color:#a4a4a4;letter-spacing:0.084px;'>3</span>
<span class="t" style='left:1303.0px;top:665.60px;font:bold 12px "DejaVu Sans Condensed","DejaVu Sans",sans-serif;color:#a4a4a4;letter-spacing:0.084px;'>4</span>
<span class="t" style='left:1326.1000000000001px;top:665.60px;font:bold 12px "DejaVu Sans Condensed","DejaVu Sans",sans-serif;color:#a4a4a4;letter-spacing:0.084px;'>5</span>
<span class="t" style='left:1233.7px;top:687.60px;font:bold 12px "DejaVu Sans Condensed","DejaVu Sans",sans-serif;color:#a4a4a4;letter-spacing:0.084px;'>6</span>
<span class="t" style='left:1256.8px;top:687.60px;font:bold 12px "DejaVu Sans Condensed","DejaVu Sans",sans-serif;color:#a4a4a4;letter-spacing:0.084px;'>7</span>
<span class="t" style='left:1279.9px;top:687.60px;font:bold 12px "DejaVu Sans Condensed","DejaVu Sans",sans-serif;color:#a4a4a4;letter-spacing:0.084px;'>8</span>
<span class="t" style='left:1303.0px;top:687.60px;font:bold 12px "DejaVu Sans Condensed","DejaVu Sans",sans-serif;color:#a4a4a4;letter-spacing:0.084px;'>9</span>
<span class="t" style='left:1322.3000000000002px;top:687.60px;font:bold 12px "DejaVu Sans Condensed","DejaVu Sans",sans-serif;color:#a4a4a4;letter-spacing:0.084px;'>10</span>
<span class="t" style='left:1229.9px;top:709.60px;font:bold 12px "DejaVu Sans Condensed","DejaVu Sans",sans-serif;color:#a4a4a4;letter-spacing:0.084px;'>11</span>
<span class="t" style='left:1253.0px;top:709.60px;font:bold 12px "DejaVu Sans Condensed","DejaVu Sans",sans-serif;color:#a4a4a4;letter-spacing:0.084px;'>12</span>
<span class="t" style='left:957.8px;top:687.00px;font:bold 12px "Liberation Sans",sans-serif;color:#000;letter-spacing:-0.115px;-webkit-text-stroke:.3px;'>ORI</span>
<span class="t" style='left:957.8px;top:709.00px;font:bold 12px "Liberation Sans",sans-serif;color:#000;letter-spacing:-0.500px;-webkit-text-stroke:.3px;'>MOD</span>
<span class="t" style='left:1036.6px;top:678.00px;font:bold 11.8px "Liberation Sans",sans-serif;color:#000;letter-spacing:0.443px;-webkit-text-stroke:.3px;'>Vai a ...</span>
<span class="t" style='left:1033.5px;top:700.50px;font:bold 11.8px "Liberation Sans",sans-serif;color:#000;letter-spacing:-0.099px;-webkit-text-stroke:.3px;'>1C4B2E</span>
<span class="t" style='left:1156.8px;top:697.80px;font:bold 8.5px "DejaVu Sans","Liberation Sans",sans-serif;color:#0a0a6c;letter-spacing:-0.869px;'>M</span>
<span class="t" style='left:1186.7px;top:697.80px;font:bold 8.5px "DejaVu Sans","Liberation Sans",sans-serif;color:#0a0a6c;letter-spacing:-0.869px;'>M</span>
<span class="t" style='left:674px;top:732.50px;font:12px "Liberation Sans",sans-serif;color:#101010;letter-spacing:-0.225px;'>Checksum: 85</span>
</div>
</body></html>
